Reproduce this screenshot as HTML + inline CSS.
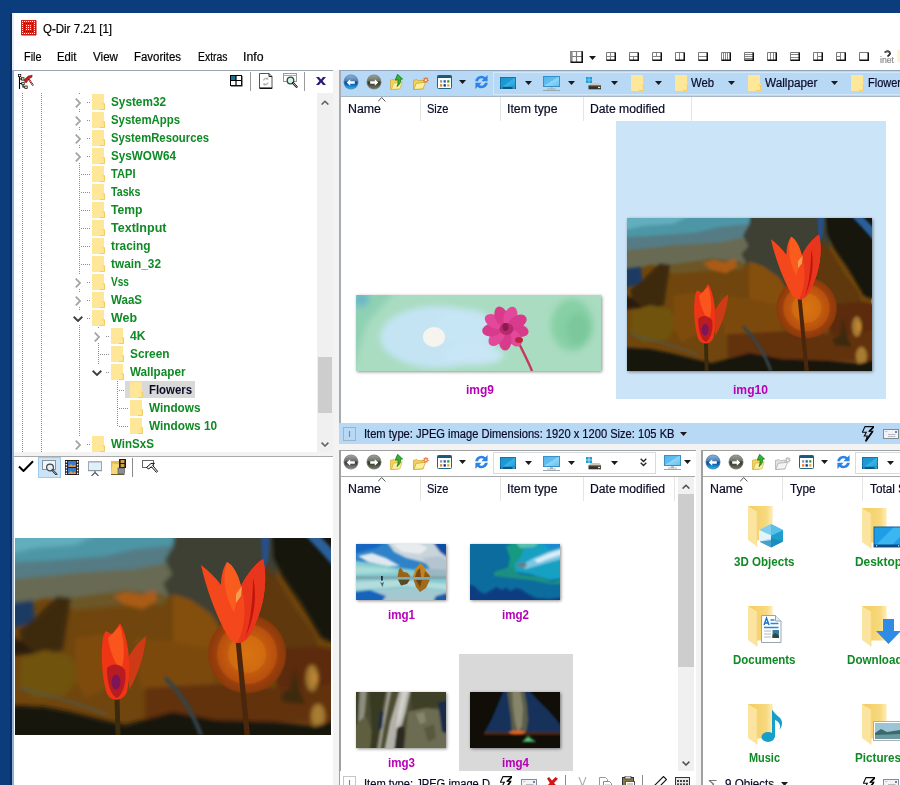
<!DOCTYPE html>
<html lang="en"><head><meta charset="utf-8"><title>Q-Dir 7.21 [1]</title>
<style>
html,body{margin:0;padding:0}
body{width:900px;height:785px;overflow:hidden;background:#0b3d7c;position:relative;font-family:"Liberation Sans",sans-serif;font-size:12px}
#root{position:absolute;left:0;top:0;width:900px;height:785px;overflow:hidden}
#root div,#root svg,#root span{position:absolute}
#root svg{overflow:hidden;display:block}
span.t{white-space:pre;line-height:1;transform-origin:0 0;-webkit-text-stroke:.2px currentColor}
span.b{font-weight:bold;-webkit-text-stroke:0}
</style></head>
<body><div id="root">
<div style="left:13px;top:13px;width:887px;height:772px;background:#fff;"></div>
<div style="left:10px;top:14px;width:2px;height:771px;background:#0a2d60;"></div>
<svg style="left:21px;top:20px;" width="16" height="16" viewBox="0 0 16 16"><rect x="0" y="0" width="15" height="15" fill="#dc2418"/><path d="M15 .5V15H.5" fill="none" stroke="#a01812" stroke-width="1"/><rect x="1" y="1" width="1" height="1" fill="#fff"/><rect x="1" y="3" width="1" height="1" fill="#fff"/><rect x="1" y="5" width="1" height="1" fill="#fff"/><rect x="1" y="7" width="1" height="1" fill="#fff"/><rect x="1" y="9" width="1" height="1" fill="#fff"/><rect x="1" y="11" width="1" height="1" fill="#fff"/><rect x="1" y="13" width="1" height="1" fill="#fff"/><rect x="3" y="1" width="1" height="1" fill="#fff"/><rect x="3" y="3" width="1" height="1" fill="#7e0808"/><rect x="3" y="5" width="1" height="1" fill="#7e0808"/><rect x="3" y="7" width="1" height="1" fill="#7e0808"/><rect x="3" y="9" width="1" height="1" fill="#7e0808"/><rect x="3" y="11" width="1" height="1" fill="#7e0808"/><rect x="3" y="13" width="1" height="1" fill="#fff"/><rect x="5" y="1" width="1" height="1" fill="#fff"/><rect x="5" y="3" width="1" height="1" fill="#7e0808"/><rect x="5" y="5" width="1" height="1" fill="#fff"/><rect x="5" y="7" width="1" height="1" fill="#fff"/><rect x="5" y="9" width="1" height="1" fill="#fff"/><rect x="5" y="11" width="1" height="1" fill="#7e0808"/><rect x="5" y="13" width="1" height="1" fill="#fff"/><rect x="7" y="1" width="1" height="1" fill="#fff"/><rect x="7" y="3" width="1" height="1" fill="#7e0808"/><rect x="7" y="5" width="1" height="1" fill="#fff"/><rect x="7" y="7" width="1" height="1" fill="#fff"/><rect x="7" y="9" width="1" height="1" fill="#fff"/><rect x="7" y="11" width="1" height="1" fill="#7e0808"/><rect x="7" y="13" width="1" height="1" fill="#fff"/><rect x="9" y="1" width="1" height="1" fill="#fff"/><rect x="9" y="3" width="1" height="1" fill="#7e0808"/><rect x="9" y="5" width="1" height="1" fill="#fff"/><rect x="9" y="7" width="1" height="1" fill="#fff"/><rect x="9" y="9" width="1" height="1" fill="#fff"/><rect x="9" y="11" width="1" height="1" fill="#7e0808"/><rect x="9" y="13" width="1" height="1" fill="#fff"/><rect x="11" y="1" width="1" height="1" fill="#fff"/><rect x="11" y="3" width="1" height="1" fill="#7e0808"/><rect x="11" y="5" width="1" height="1" fill="#7e0808"/><rect x="11" y="7" width="1" height="1" fill="#7e0808"/><rect x="11" y="9" width="1" height="1" fill="#7e0808"/><rect x="11" y="11" width="1" height="1" fill="#7e0808"/><rect x="11" y="13" width="1" height="1" fill="#fff"/><rect x="13" y="1" width="1" height="1" fill="#fff"/><rect x="13" y="3" width="1" height="1" fill="#fff"/><rect x="13" y="5" width="1" height="1" fill="#fff"/><rect x="13" y="7" width="1" height="1" fill="#fff"/><rect x="13" y="9" width="1" height="1" fill="#fff"/><rect x="13" y="11" width="1" height="1" fill="#fff"/><rect x="13" y="13" width="1" height="1" fill="#fff"/></svg>
<span class="t" style="left:42.50px;top:22.84px;font-size:12px;color:#000;transform:scaleX(0.9579);">Q-Dir 7.21 [1]</span>
<span class="t" style="left:23.50px;top:50.84px;font-size:12px;color:#000;transform:scaleX(0.9047);">File</span>
<span class="t" style="left:57.00px;top:50.84px;font-size:12px;color:#000;transform:scaleX(0.9426);">Edit</span>
<span class="t" style="left:93.00px;top:50.84px;font-size:12px;color:#000;transform:scaleX(0.9691);">View</span>
<span class="t" style="left:134.00px;top:50.84px;font-size:12px;color:#000;transform:scaleX(0.9522);">Favorites</span>
<span class="t" style="left:197.50px;top:50.84px;font-size:12px;color:#000;transform:scaleX(0.8672);">Extras</span>
<span class="t" style="left:243.00px;top:50.84px;font-size:12px;color:#000;transform:scaleX(1.0242);">Info</span>
<svg style="left:570px;top:51px;" width="13" height="12" viewBox="0 0 13 12"><rect x="0" y="0" width="13" height="12" fill="#fff"/><rect x="0" y="0" width="2.6" height="11" fill="#8c8c8c"/><path d="M.5 11V.5H12" fill="none" stroke="#888"/><path d="M6.5 .5V11M2 5.5H12" stroke="#7c7c7c" stroke-width="1.2"/><path d="M12.2 .3V11.2H.5" fill="none" stroke="#111" stroke-width="1.6"/></svg>
<svg style="left:589px;top:56px;" width="7" height="4" viewBox="0 0 7 4"><path d="M0 0h7L3.5 4z" fill="#1a1a1a"/></svg>
<svg style="left:606px;top:52px;" width="10" height="9" viewBox="0 0 10 9"><rect x="0" y="0" width="10" height="9" fill="#fff"/><path d="M4.5 0.5V8M0.5 4.5H9" stroke="#858585" stroke-width="1" fill="none"/><path d="M.5 8.5V.5H9.5" fill="none" stroke="#7a7a7a"/><path d="M9.250 .5V8.250H.5" fill="none" stroke="#111" stroke-width="1.500"/></svg>
<svg style="left:629px;top:52px;" width="10" height="9" viewBox="0 0 10 9"><rect x="0" y="0" width="10" height="9" fill="#fff"/><path d="M0.5 4.5H9M4.5 4.5V8" stroke="#858585" stroke-width="1" fill="none"/><path d="M.5 8.5V.5H9.5" fill="none" stroke="#7a7a7a"/><path d="M9.250 .5V8.250H.5" fill="none" stroke="#111" stroke-width="1.500"/></svg>
<svg style="left:652px;top:52px;" width="10" height="9" viewBox="0 0 10 9"><rect x="0" y="0" width="10" height="9" fill="#fff"/><path d="M0.5 4.5H9M4.5 0.5V4.5" stroke="#858585" stroke-width="1" fill="none"/><path d="M.5 8.5V.5H9.5" fill="none" stroke="#7a7a7a"/><path d="M9.250 .5V8.250H.5" fill="none" stroke="#111" stroke-width="1.500"/></svg>
<svg style="left:675px;top:52px;" width="10" height="9" viewBox="0 0 10 9"><rect x="0" y="0" width="10" height="9" fill="#fff"/><path d="M4.5 0.5V8" stroke="#858585" stroke-width="1" fill="none"/><path d="M.5 8.5V.5H9.5" fill="none" stroke="#7a7a7a"/><path d="M9.250 .5V8.250H.5" fill="none" stroke="#111" stroke-width="1.500"/></svg>
<svg style="left:698px;top:52px;" width="10" height="9" viewBox="0 0 10 9"><rect x="0" y="0" width="10" height="9" fill="#fff"/><path d="M0.5 4.5H9" stroke="#858585" stroke-width="1" fill="none"/><path d="M.5 8.5V.5H9.5" fill="none" stroke="#7a7a7a"/><path d="M9.250 .5V8.250H.5" fill="none" stroke="#111" stroke-width="1.500"/></svg>
<svg style="left:721px;top:52px;" width="10" height="9" viewBox="0 0 10 9"><rect x="0" y="0" width="10" height="9" fill="#fff"/><path d="M2.5 0.5V8M4.5 0.5V8M6.5 0.5V8" stroke="#858585" stroke-width="1" fill="none"/><path d="M.5 8.5V.5H9.5" fill="none" stroke="#7a7a7a"/><path d="M9.250 .5V8.250H.5" fill="none" stroke="#111" stroke-width="1.500"/></svg>
<svg style="left:744px;top:52px;" width="10" height="9" viewBox="0 0 10 9"><rect x="0" y="0" width="10" height="9" fill="#fff"/><path d="M0.5 2.5H9M0.5 4.5H9M0.5 6.5H9" stroke="#858585" stroke-width="1" fill="none"/><path d="M.5 8.5V.5H9.5" fill="none" stroke="#7a7a7a"/><path d="M9.250 .5V8.250H.5" fill="none" stroke="#111" stroke-width="1.500"/></svg>
<svg style="left:767px;top:52px;" width="10" height="9" viewBox="0 0 10 9"><rect x="0" y="0" width="10" height="9" fill="#fff"/><path d="M3.5 0.5V8M6.5 0.5V8" stroke="#858585" stroke-width="1" fill="none"/><path d="M.5 8.5V.5H9.5" fill="none" stroke="#7a7a7a"/><path d="M9.250 .5V8.250H.5" fill="none" stroke="#111" stroke-width="1.500"/></svg>
<svg style="left:790px;top:52px;" width="10" height="9" viewBox="0 0 10 9"><rect x="0" y="0" width="10" height="9" fill="#fff"/><path d="M0.5 2.5H9M0.5 5.5H9" stroke="#858585" stroke-width="1" fill="none"/><path d="M.5 8.5V.5H9.5" fill="none" stroke="#7a7a7a"/><path d="M9.250 .5V8.250H.5" fill="none" stroke="#111" stroke-width="1.500"/></svg>
<svg style="left:813px;top:52px;" width="10" height="9" viewBox="0 0 10 9"><rect x="0" y="0" width="10" height="9" fill="#fff"/><path d="M4.5 0.5V8M4.5 4.5H9" stroke="#858585" stroke-width="1" fill="none"/><path d="M.5 8.5V.5H9.5" fill="none" stroke="#7a7a7a"/><path d="M9.250 .5V8.250H.5" fill="none" stroke="#111" stroke-width="1.500"/></svg>
<svg style="left:836px;top:52px;" width="10" height="9" viewBox="0 0 10 9"><rect x="0" y="0" width="10" height="9" fill="#fff"/><path d="M4.5 0.5V8M0.5 4.5H4.5" stroke="#858585" stroke-width="1" fill="none"/><path d="M.5 8.5V.5H9.5" fill="none" stroke="#7a7a7a"/><path d="M9.250 .5V8.250H.5" fill="none" stroke="#111" stroke-width="1.500"/></svg>
<svg style="left:859px;top:52px;" width="10" height="9" viewBox="0 0 10 9"><rect x="0" y="0" width="10" height="9" fill="#fff"/><path d="M.5 8.5V.5H9.5" fill="none" stroke="#7a7a7a"/><path d="M9.250 .5V8.250H.5" fill="none" stroke="#111" stroke-width="1.500"/></svg>
<svg style="left:882px;top:50px;" width="10" height="9" viewBox="0 0 13 10"><path d="M3.5 2.5Q7 -.8 10 2.2Q11.5 4.5 8 6.5V8" fill="none" stroke="#222" stroke-width="2.2"/><path d="M3.5 2.5Q7 -.8 10 2.2" fill="none" stroke="#999" stroke-width=".8"/></svg>
<span class="t" style="left:879.50px;top:56.38px;font-size:9px;color:#8a8a8a;transform:scaleX(0.9645);">inet</span>
<div style="left:897px;top:50px;width:3px;height:12px;background:#fdf5cf;"></div>
<div style="left:13px;top:70px;width:887px;height:715px;background:#f3f3f3;"></div>
<div style="left:13px;top:70px;width:320px;height:1px;background:#9aa3ad;"></div>
<div style="left:13px;top:71px;width:320px;height:381px;background:#fff;"></div>
<svg style="left:18px;top:74px;" width="16" height="16" viewBox="0 0 16 16"><path d="M1.5 1V15M1.500 5H4M1.500 9.500H4M5 10.500V13H7.500" fill="none" stroke="#000" stroke-width="1.100"/><rect x=".4" y=".3" width="2.400" height="2.400" fill="#fff" stroke="#000" stroke-width=".7"/><rect x="3.600" y="3.700" width="2.400" height="2.400" fill="#f4f480" stroke="#000" stroke-width=".7"/><rect x="3.800" y="8.300" width="2.400" height="2.400" fill="#fff" stroke="#000" stroke-width=".7"/><rect x="6.800" y="12" width="2.400" height="2.400" fill="#f4f480" stroke="#000" stroke-width=".7"/><path d="M10.500 5L15.200 11.500" stroke="#7c1010" stroke-width="2" stroke-dasharray="1.200 .6"/><path d="M5.800 6.200L10.300 2 14.200 1.300 13.800 3.200 11.200 4.600 8 9z" fill="#c41c1c" stroke="#701010" stroke-width=".6"/></svg>
<svg style="left:230px;top:75px;" width="13" height="12" viewBox="0 0 13 12"><rect x=".5" y=".5" width="11" height="10" fill="#fff" stroke="#000"/><rect x="1" y="1" width="5" height="4.5" fill="#16739a"/><path d="M6 0v11M0 5.5h12" stroke="#000" stroke-width="1.2"/><path d="M12.3 1v10.3H1" stroke="#555" stroke-width=".8" fill="none"/></svg>
<div style="left:250px;top:72px;width:1px;height:19px;background:#9a9a9a;"></div>
<svg style="left:259px;top:73px;" width="14" height="16" viewBox="0 0 14 16"><path d="M.5 .5h9.5l3 3V15H.5z" fill="#fff" stroke="#555"/><path d="M.5 15.3h12.8" stroke="#000" stroke-width="1.2"/><path d="M10 .5v3h3" fill="none" stroke="#222"/><path d="M4.5 7.5a2.5 2.5 0 0 1 4-1.5M9 9.5a2.5 2.5 0 0 1-4 1.5" fill="none" stroke="#b0b0b0" stroke-width="1.3"/><path d="M8 4l2 2.2-2.6.5zM5.6 13l-2-2.2 2.6-.5z" fill="#b0b0b0"/></svg>
<svg style="left:283px;top:73px;" width="15" height="16" viewBox="0 0 15 16"><rect x=".5" y=".5" width="13" height="8" fill="#fff" stroke="#999"/><path d="M.5 2.5h13" stroke="#aaa"/><circle cx="7.5" cy="7.5" r="3.3" fill="#d6efe9" stroke="#2a4a48" stroke-width="1.3"/><path d="M10 10l3.6 3.8" stroke="#222" stroke-width="2.2" stroke-linecap="round"/><path d="M10.4 10.4l3 3.1" stroke="#ccc" stroke-width=".8" stroke-linecap="round"/></svg>
<div style="left:304px;top:72px;width:1px;height:19px;background:#9a9a9a;"></div>
<svg style="left:316px;top:77px;" width="10" height="8" viewBox="0 0 10 8"><path d="M0 0h3l2 2.4L7 0h3L6.6 4 10 8H7L5 5.6 3 8H0l3.4-4z" fill="#2a1a80"/></svg>
<svg style="left:13px;top:71px;" width="304" height="381" viewBox="0 0 304 381"><path d="M9.5 22V381" stroke="#8c8c8c" stroke-width="1" stroke-dasharray="1 1" fill="none"/><path d="M28.5 22V381" stroke="#8c8c8c" stroke-width="1" stroke-dasharray="1 1" fill="none"/><path d="M66.5 22V372" stroke="#8c8c8c" stroke-width="1" stroke-dasharray="1 1" fill="none"/><path d="M85.5 256V301" stroke="#8c8c8c" stroke-width="1" stroke-dasharray="1 1" fill="none"/><path d="M104.5 310V355" stroke="#8c8c8c" stroke-width="1" stroke-dasharray="1 1" fill="none"/><path d="M74 31.5H78" stroke="#8c8c8c" stroke-width="1" stroke-dasharray="1 1" fill="none"/><path d="M74 49.5H78" stroke="#8c8c8c" stroke-width="1" stroke-dasharray="1 1" fill="none"/><path d="M74 67.5H78" stroke="#8c8c8c" stroke-width="1" stroke-dasharray="1 1" fill="none"/><path d="M74 85.5H78" stroke="#8c8c8c" stroke-width="1" stroke-dasharray="1 1" fill="none"/><path d="M68 103.5H78" stroke="#8c8c8c" stroke-width="1" stroke-dasharray="1 1" fill="none"/><path d="M68 121.5H78" stroke="#8c8c8c" stroke-width="1" stroke-dasharray="1 1" fill="none"/><path d="M68 139.5H78" stroke="#8c8c8c" stroke-width="1" stroke-dasharray="1 1" fill="none"/><path d="M68 157.5H78" stroke="#8c8c8c" stroke-width="1" stroke-dasharray="1 1" fill="none"/><path d="M68 175.5H78" stroke="#8c8c8c" stroke-width="1" stroke-dasharray="1 1" fill="none"/><path d="M68 193.5H78" stroke="#8c8c8c" stroke-width="1" stroke-dasharray="1 1" fill="none"/><path d="M74 211.5H78" stroke="#8c8c8c" stroke-width="1" stroke-dasharray="1 1" fill="none"/><path d="M74 229.5H78" stroke="#8c8c8c" stroke-width="1" stroke-dasharray="1 1" fill="none"/><path d="M74 247.5H78" stroke="#8c8c8c" stroke-width="1" stroke-dasharray="1 1" fill="none"/><path d="M93 265.5H97" stroke="#8c8c8c" stroke-width="1" stroke-dasharray="1 1" fill="none"/><path d="M87 283.5H97" stroke="#8c8c8c" stroke-width="1" stroke-dasharray="1 1" fill="none"/><path d="M93 301.5H97" stroke="#8c8c8c" stroke-width="1" stroke-dasharray="1 1" fill="none"/><path d="M106 319.5H116" stroke="#8c8c8c" stroke-width="1" stroke-dasharray="1 1" fill="none"/><path d="M106 337.5H116" stroke="#8c8c8c" stroke-width="1" stroke-dasharray="1 1" fill="none"/><path d="M106 355.5H116" stroke="#8c8c8c" stroke-width="1" stroke-dasharray="1 1" fill="none"/><path d="M74 373.5H78" stroke="#8c8c8c" stroke-width="1" stroke-dasharray="1 1" fill="none"/></svg>
<div style="left:73px;top:95px;width:9px;height:14px;background:#fff;"></div>
<svg style="left:75px;top:97.5px;" width="6" height="10" viewBox="0 0 6 10"><path d="M.8 .6L5 5 .8 9.400" fill="none" stroke="#a3a3a3" stroke-width="1.800"/></svg>
<svg style="left:92px;top:94px;" width="13" height="16" viewBox="0 0 13 16"><path d="M0 0H12V9H13V16H0z" fill="#ffe799"/><path d="M10.5 10H12.5V15.5H8" fill="none" stroke="#f3cf62" stroke-width="1"/><path d="M11.5 11V15" stroke="#ffe28a" stroke-width="1"/></svg>
<span class="t b" style="left:111.00px;top:96.34px;font-size:12px;color:#0f8a24;transform:scaleX(0.9813);">System32</span>
<div style="left:73px;top:113px;width:9px;height:14px;background:#fff;"></div>
<svg style="left:75px;top:115.5px;" width="6" height="10" viewBox="0 0 6 10"><path d="M.8 .6L5 5 .8 9.400" fill="none" stroke="#a3a3a3" stroke-width="1.800"/></svg>
<svg style="left:92px;top:112px;" width="13" height="16" viewBox="0 0 13 16"><path d="M0 0H12V9H13V16H0z" fill="#ffe799"/><path d="M10.5 10H12.5V15.5H8" fill="none" stroke="#f3cf62" stroke-width="1"/><path d="M11.5 11V15" stroke="#ffe28a" stroke-width="1"/></svg>
<span class="t b" style="left:111.00px;top:114.34px;font-size:12px;color:#0f8a24;transform:scaleX(0.9491);">SystemApps</span>
<div style="left:73px;top:131px;width:9px;height:14px;background:#fff;"></div>
<svg style="left:75px;top:133.5px;" width="6" height="10" viewBox="0 0 6 10"><path d="M.8 .6L5 5 .8 9.400" fill="none" stroke="#a3a3a3" stroke-width="1.800"/></svg>
<svg style="left:92px;top:130px;" width="13" height="16" viewBox="0 0 13 16"><path d="M0 0H12V9H13V16H0z" fill="#ffe799"/><path d="M10.5 10H12.5V15.5H8" fill="none" stroke="#f3cf62" stroke-width="1"/><path d="M11.5 11V15" stroke="#ffe28a" stroke-width="1"/></svg>
<span class="t b" style="left:111.00px;top:132.34px;font-size:12px;color:#0f8a24;transform:scaleX(0.9417);">SystemResources</span>
<div style="left:73px;top:149px;width:9px;height:14px;background:#fff;"></div>
<svg style="left:75px;top:151.5px;" width="6" height="10" viewBox="0 0 6 10"><path d="M.8 .6L5 5 .8 9.400" fill="none" stroke="#a3a3a3" stroke-width="1.800"/></svg>
<svg style="left:92px;top:148px;" width="13" height="16" viewBox="0 0 13 16"><path d="M0 0H12V9H13V16H0z" fill="#ffe799"/><path d="M10.5 10H12.5V15.5H8" fill="none" stroke="#f3cf62" stroke-width="1"/><path d="M11.5 11V15" stroke="#ffe28a" stroke-width="1"/></svg>
<span class="t b" style="left:111.00px;top:150.34px;font-size:12px;color:#0f8a24;transform:scaleX(0.9747);">SysWOW64</span>
<svg style="left:92px;top:166px;" width="13" height="16" viewBox="0 0 13 16"><path d="M0 0H12V9H13V16H0z" fill="#ffe799"/><path d="M10.5 10H12.5V15.5H8" fill="none" stroke="#f3cf62" stroke-width="1"/><path d="M11.5 11V15" stroke="#ffe28a" stroke-width="1"/></svg>
<span class="t b" style="left:111.00px;top:168.34px;font-size:12px;color:#0f8a24;transform:scaleX(0.9262);">TAPI</span>
<svg style="left:92px;top:184px;" width="13" height="16" viewBox="0 0 13 16"><path d="M0 0H12V9H13V16H0z" fill="#ffe799"/><path d="M10.5 10H12.5V15.5H8" fill="none" stroke="#f3cf62" stroke-width="1"/><path d="M11.5 11V15" stroke="#ffe28a" stroke-width="1"/></svg>
<span class="t b" style="left:111.00px;top:186.34px;font-size:12px;color:#0f8a24;transform:scaleX(0.8901);">Tasks</span>
<svg style="left:92px;top:202px;" width="13" height="16" viewBox="0 0 13 16"><path d="M0 0H12V9H13V16H0z" fill="#ffe799"/><path d="M10.5 10H12.5V15.5H8" fill="none" stroke="#f3cf62" stroke-width="1"/><path d="M11.5 11V15" stroke="#ffe28a" stroke-width="1"/></svg>
<span class="t b" style="left:111.00px;top:204.34px;font-size:12px;color:#0f8a24;transform:scaleX(1.0120);">Temp</span>
<svg style="left:92px;top:220px;" width="13" height="16" viewBox="0 0 13 16"><path d="M0 0H12V9H13V16H0z" fill="#ffe799"/><path d="M10.5 10H12.5V15.5H8" fill="none" stroke="#f3cf62" stroke-width="1"/><path d="M11.5 11V15" stroke="#ffe28a" stroke-width="1"/></svg>
<span class="t b" style="left:111.00px;top:222.34px;font-size:12px;color:#0f8a24;transform:scaleX(1.0450);">TextInput</span>
<svg style="left:92px;top:238px;" width="13" height="16" viewBox="0 0 13 16"><path d="M0 0H12V9H13V16H0z" fill="#ffe799"/><path d="M10.5 10H12.5V15.5H8" fill="none" stroke="#f3cf62" stroke-width="1"/><path d="M11.5 11V15" stroke="#ffe28a" stroke-width="1"/></svg>
<span class="t b" style="left:111.00px;top:240.34px;font-size:12px;color:#0f8a24;transform:scaleX(0.9871);">tracing</span>
<svg style="left:92px;top:256px;" width="13" height="16" viewBox="0 0 13 16"><path d="M0 0H12V9H13V16H0z" fill="#ffe799"/><path d="M10.5 10H12.5V15.5H8" fill="none" stroke="#f3cf62" stroke-width="1"/><path d="M11.5 11V15" stroke="#ffe28a" stroke-width="1"/></svg>
<span class="t b" style="left:111.00px;top:258.34px;font-size:12px;color:#0f8a24;transform:scaleX(0.9861);">twain_32</span>
<div style="left:73px;top:275px;width:9px;height:14px;background:#fff;"></div>
<svg style="left:75px;top:277.5px;" width="6" height="10" viewBox="0 0 6 10"><path d="M.8 .6L5 5 .8 9.400" fill="none" stroke="#a3a3a3" stroke-width="1.800"/></svg>
<svg style="left:92px;top:274px;" width="13" height="16" viewBox="0 0 13 16"><path d="M0 0H12V9H13V16H0z" fill="#ffe799"/><path d="M10.5 10H12.5V15.5H8" fill="none" stroke="#f3cf62" stroke-width="1"/><path d="M11.5 11V15" stroke="#ffe28a" stroke-width="1"/></svg>
<span class="t b" style="left:111.00px;top:276.34px;font-size:12px;color:#0f8a24;transform:scaleX(0.8427);">Vss</span>
<div style="left:73px;top:293px;width:9px;height:14px;background:#fff;"></div>
<svg style="left:75px;top:295.5px;" width="6" height="10" viewBox="0 0 6 10"><path d="M.8 .6L5 5 .8 9.400" fill="none" stroke="#a3a3a3" stroke-width="1.800"/></svg>
<svg style="left:92px;top:292px;" width="13" height="16" viewBox="0 0 13 16"><path d="M0 0H12V9H13V16H0z" fill="#ffe799"/><path d="M10.5 10H12.5V15.5H8" fill="none" stroke="#f3cf62" stroke-width="1"/><path d="M11.5 11V15" stroke="#ffe28a" stroke-width="1"/></svg>
<span class="t b" style="left:111.00px;top:294.34px;font-size:12px;color:#0f8a24;transform:scaleX(0.9617);">WaaS</span>
<div style="left:72px;top:311px;width:11px;height:14px;background:#fff;"></div>
<svg style="left:73px;top:315.5px;" width="10" height="6" viewBox="0 0 10 6"><path d="M.7 .8L5 5 9.300 .8" fill="none" stroke="#404040" stroke-width="1.900"/></svg>
<svg style="left:92px;top:310px;" width="13" height="16" viewBox="0 0 13 16"><path d="M0 0H12V9H13V16H0z" fill="#ffe799"/><path d="M10.5 10H12.5V15.5H8" fill="none" stroke="#f3cf62" stroke-width="1"/><path d="M11.5 11V15" stroke="#ffe28a" stroke-width="1"/></svg>
<span class="t b" style="left:111.00px;top:312.34px;font-size:12px;color:#0f8a24;transform:scaleX(1.0348);">Web</span>
<div style="left:92px;top:329px;width:9px;height:14px;background:#fff;"></div>
<svg style="left:94px;top:331.5px;" width="6" height="10" viewBox="0 0 6 10"><path d="M.8 .6L5 5 .8 9.400" fill="none" stroke="#a3a3a3" stroke-width="1.800"/></svg>
<svg style="left:111px;top:328px;" width="13" height="16" viewBox="0 0 13 16"><path d="M0 0H12V9H13V16H0z" fill="#ffe799"/><path d="M10.5 10H12.5V15.5H8" fill="none" stroke="#f3cf62" stroke-width="1"/><path d="M11.5 11V15" stroke="#ffe28a" stroke-width="1"/></svg>
<span class="t b" style="left:130.00px;top:330.34px;font-size:12px;color:#0f8a24;transform:scaleX(1.0102);">4K</span>
<svg style="left:111px;top:346px;" width="13" height="16" viewBox="0 0 13 16"><path d="M0 0H12V9H13V16H0z" fill="#ffe799"/><path d="M10.5 10H12.5V15.5H8" fill="none" stroke="#f3cf62" stroke-width="1"/><path d="M11.5 11V15" stroke="#ffe28a" stroke-width="1"/></svg>
<span class="t b" style="left:130.00px;top:348.34px;font-size:12px;color:#0f8a24;transform:scaleX(0.9867);">Screen</span>
<div style="left:91px;top:365px;width:11px;height:14px;background:#fff;"></div>
<svg style="left:92px;top:369.5px;" width="10" height="6" viewBox="0 0 10 6"><path d="M.7 .8L5 5 9.300 .8" fill="none" stroke="#404040" stroke-width="1.900"/></svg>
<svg style="left:111px;top:364px;" width="13" height="16" viewBox="0 0 13 16"><path d="M0 0H12V9H13V16H0z" fill="#ffe799"/><path d="M10.5 10H12.5V15.5H8" fill="none" stroke="#f3cf62" stroke-width="1"/><path d="M11.5 11V15" stroke="#ffe28a" stroke-width="1"/></svg>
<span class="t b" style="left:130.00px;top:366.34px;font-size:12px;color:#0f8a24;transform:scaleX(0.9753);">Wallpaper</span>
<div style="left:125px;top:381px;width:70px;height:17px;background:#d9d9d9;"></div>
<svg style="left:130px;top:382px;" width="13" height="16" viewBox="0 0 13 16"><path d="M0 0H12V9H13V16H0z" fill="#ffe799"/><path d="M10.5 10H12.5V15.5H8" fill="none" stroke="#f3cf62" stroke-width="1"/><path d="M11.5 11V15" stroke="#ffe28a" stroke-width="1"/></svg>
<span class="t b" style="left:149.00px;top:384.34px;font-size:12px;color:#0a0a26;transform:scaleX(0.9480);">Flowers</span>
<svg style="left:130px;top:400px;" width="13" height="16" viewBox="0 0 13 16"><path d="M0 0H12V9H13V16H0z" fill="#ffe799"/><path d="M10.5 10H12.5V15.5H8" fill="none" stroke="#f3cf62" stroke-width="1"/><path d="M11.5 11V15" stroke="#ffe28a" stroke-width="1"/></svg>
<span class="t b" style="left:149.00px;top:402.34px;font-size:12px;color:#0f8a24;transform:scaleX(0.9798);">Windows</span>
<svg style="left:130px;top:418px;" width="13" height="16" viewBox="0 0 13 16"><path d="M0 0H12V9H13V16H0z" fill="#ffe799"/><path d="M10.5 10H12.5V15.5H8" fill="none" stroke="#f3cf62" stroke-width="1"/><path d="M11.5 11V15" stroke="#ffe28a" stroke-width="1"/></svg>
<span class="t b" style="left:149.00px;top:420.34px;font-size:12px;color:#0f8a24;transform:scaleX(0.9822);">Windows 10</span>
<div style="left:73px;top:437px;width:9px;height:14px;background:#fff;"></div>
<svg style="left:75px;top:439.5px;" width="6" height="10" viewBox="0 0 6 10"><path d="M.8 .6L5 5 .8 9.400" fill="none" stroke="#a3a3a3" stroke-width="1.800"/></svg>
<svg style="left:92px;top:436px;" width="13" height="16" viewBox="0 0 13 16"><path d="M0 0H12V9H13V16H0z" fill="#ffe799"/><path d="M10.5 10H12.5V15.5H8" fill="none" stroke="#f3cf62" stroke-width="1"/><path d="M11.5 11V15" stroke="#ffe28a" stroke-width="1"/></svg>
<span class="t b" style="left:111.00px;top:438.34px;font-size:12px;color:#0f8a24;transform:scaleX(0.9646);">WinSxS</span>
<div style="left:317px;top:93px;width:16px;height:359px;background:#f0f0f0;"></div>
<svg style="left:321px;top:99.5px;" width="8" height="5" viewBox="0 0 8 5"><path d="M.6 4.6L4 1.2 7.4 4.6" fill="none" stroke="#606060" stroke-width="1.5"/></svg>
<svg style="left:321px;top:441.5px;" width="8" height="5" viewBox="0 0 8 5"><path d="M.6 .6L4 4 7.4 .6" fill="none" stroke="#606060" stroke-width="1.5"/></svg>
<div style="left:318px;top:357px;width:14px;height:56px;background:#cdcdcd;"></div>
<div style="left:13px;top:456px;width:320px;height:329px;background:#fff;"></div>
<div style="left:13px;top:456px;width:320px;height:1px;background:#a8a8a8;"></div>
<svg style="left:18px;top:460px;" width="16" height="12" viewBox="0 0 16 12"><path d="M1 6.5L5.5 11 15 1.2" fill="none" stroke="#000" stroke-width="2"/></svg>
<div style="left:38px;top:457px;width:23px;height:21px;background:#cce4f7;box-sizing:border-box;border:1px solid #99ccee;"></div>
<svg style="left:42px;top:460px;" width="16" height="15" viewBox="0 0 16 15"><rect x=".5" y=".5" width="13" height="9" fill="#eef6fb" stroke="#8a949c"/><circle cx="8" cy="7.5" r="3.4" fill="#e4f2f8" stroke="#444" stroke-width="1.2"/><path d="M10.5 10.2l3.8 4" stroke="#333" stroke-width="2.2" stroke-linecap="round"/><path d="M10.9 10.6l3.2 3.3" stroke="#cfcfcf" stroke-width=".8" stroke-linecap="round"/></svg>
<svg style="left:65px;top:460px;" width="14" height="15" viewBox="0 0 14 15"><rect x="0" y="0" width="14" height="15" fill="#1a1a1a"/><rect x="3" y="1" width="8" height="6" fill="#3a7bd0"/><rect x="3" y="8" width="8" height="6" fill="#3a7bd0"/><path d="M3 7l3-3 2 2 1.5-1.5L11 7z" fill="#e0a040"/><path d="M3 14l3-3 2 2 1.5-1.5L11 14z" fill="#e0a040"/><rect x=".7" y="1.0" width="1.4" height="1.6" fill="#fff"/><rect x="11.9" y="1.0" width="1.4" height="1.6" fill="#fff"/><rect x=".7" y="3.9" width="1.4" height="1.6" fill="#fff"/><rect x="11.9" y="3.9" width="1.4" height="1.6" fill="#fff"/><rect x=".7" y="6.8" width="1.4" height="1.6" fill="#fff"/><rect x="11.9" y="6.8" width="1.4" height="1.6" fill="#fff"/><rect x=".7" y="9.7" width="1.4" height="1.6" fill="#fff"/><rect x="11.9" y="9.7" width="1.4" height="1.6" fill="#fff"/><rect x=".7" y="12.6" width="1.4" height="1.6" fill="#fff"/><rect x="11.9" y="12.6" width="1.4" height="1.6" fill="#fff"/></svg>
<svg style="left:88px;top:461px;" width="14" height="15" viewBox="0 0 14 15"><rect x=".5" y=".5" width="13" height="9" fill="#dff0f8" stroke="#9ab"/><rect x="0" y="0" width="14" height="1.6" fill="#a8b4bc"/><rect x="0" y="9" width="14" height="1.2" fill="#8a949c"/><path d="M7 10v2M7 11.5L3.5 15M7 11.5L10.5 15" stroke="#555" stroke-width="1.1" fill="none"/></svg>
<svg style="left:110px;top:459px;" width="16" height="16" viewBox="0 0 16 16"><path d="M1 2h8l1 1v12.5H1z" fill="#e8b84a"/><path d="M1 15.5l1.5-11 7 .8v10.2z" fill="#f8d878"/><rect x="9" y="0" width="7" height="9" fill="#1a1a1a"/><rect x="10.6" y="1" width="3.8" height="3" fill="#d8a040"/><rect x="10.6" y="5" width="3.8" height="3" fill="#d8a040"/><rect x="8" y="9" width="6.5" height="5.5" fill="#8a8f96" stroke="#444" stroke-width=".6"/><path d="M1 15.5h13.5" stroke="#6a5a30" stroke-width="1"/></svg>
<div style="left:132px;top:458px;width:1px;height:19px;background:#8a8a8a;"></div>
<svg style="left:142px;top:460px;" width="17" height="13" viewBox="0 0 17 13"><rect x=".5" y=".5" width="11" height="7" fill="#fff" stroke="#666"/><path d="M4.5 7.5l4.5-4 3.4-.2-1.8 2 5 6-1.2 1-5-5.6-2.6 2.2z" fill="#fff" stroke="#111" stroke-width="1"/></svg>
<svg style="left:15px;top:538px;" width="316" height="197" viewBox="0 0 316 197"><defs><filter id="tb1a" x="-20%" y="-20%" width="140%" height="140%"><feGaussianBlur stdDeviation="2.2"/></filter>
<filter id="tb1b" x="-20%" y="-20%" width="140%" height="140%"><feGaussianBlur stdDeviation="1.4"/></filter>
<filter id="tb1c"><feGaussianBlur stdDeviation=".7"/></filter>
<radialGradient id="tb1g"><stop offset="0" stop-color="#d97412"/><stop offset=".45" stop-color="#d06a10"/><stop offset=".5" stop-color="#c25a0e"/><stop offset=".72" stop-color="#b8500e"/><stop offset=".78" stop-color="#9a400c"/><stop offset=".95" stop-color="#8c3a0a"/><stop offset="1" stop-color="#8c3a0a" stop-opacity="0"/></radialGradient></defs>
<rect width="316" height="197" fill="#70460e"/>
<g filter="url(#tb1a)">
<path d="M-10 -10H165V8L120 13 90 21 40 25-10 30z" fill="#4d96a6"/>
<path d="M-10 -10H95L60 7 20 10-10 17z" fill="#62aebc"/>
<path d="M-10 25L40 22 90 18 120 11 160 7V26L120 34 60 38-10 46z" fill="#547c84"/>
<path d="M-10 42L60 35 120 31 165 22V52L150 60 110 56 70 62 30 60-10 72z" fill="#686a52"/>
<path d="M40 62L70 58 110 52 150 56V66L100 68 60 72z" fill="#6c5626"/>
<path d="M-10 66L18 62 20 84 -10 92z" fill="#1d3a62"/>
<path d="M22 78L42 58 56 60 52 84 48 112 30 118 8 112 4 92z" fill="#3e2a08"/>
<path d="M-10 96L8 104 20 116 -10 118z" fill="#2a1e08"/>
<path d="M98 58L112 54 126 57 140 52 142 63 128 71 110 67z" fill="#aa5c18"/>
<path d="M160 -10H262V40L250 70 238 100 214 104 200 80 186 70 170 62 154 58 148 46 157 36 150 22 158 8z" fill="#3d4131"/>
<path d="M158 56L176 62 196 76 208 100 200 110 158 110z" fill="#84500e"/>
<path d="M250 26L262 40 280 70 300 96 306 120 270 120 240 100z" fill="#5e370c"/>
<path d="M256 -10H330V110L306 100 286 66 268 40 258 20z" fill="#16150a"/>
<path d="M6 120L30 112 56 118 64 140 50 158 20 160 4 148z" fill="#70520f"/>
<path d="M60 100L90 96 92 150 70 160 60 140z" fill="#7e4c0c"/>
<path d="M120 100L160 104 196 112 200 150 160 152 126 150z" fill="#7c4a0e"/>
<path d="M130 150L200 146 262 150 300 130 330 126V184H130z" fill="#62300a"/>
<path d="M258 112L300 108 330 112V140L300 150 262 150z" fill="#5c2a08"/>
<ellipse cx="297" cy="140" rx="6" ry="13" fill="#a87c32"/>
<ellipse cx="303" cy="178" rx="7" ry="12" fill="#a87c32"/>
<ellipse cx="300" cy="140" rx="2.5" ry="6" fill="#c88c30"/>
<path d="M279 128L284 150 290 166 268 164 266 156 276 150z" fill="#3c2a08"/>
<path d="M-10 167L30 169 56 174 92 183 110 187 158 174 200 182 262 184 300 188 330 180V210H-10z" fill="#18140a"/>
</g>
<g filter="url(#tb1b)">
<path d="M246 -5H255L253 22 248 34z" fill="#27508a"/>
<path d="M288 -5H302L320 14V30L304 12z" fill="#2a5f9a"/>
<path d="M150 140Q172 160 186 197" stroke="#34444a" stroke-width="4" fill="none"/>
<path d="M4 150L50 162 92 176" stroke="#4a5a5c" stroke-width="1.5" fill="none"/>
</g>
<circle cx="232" cy="116" r="40" fill="url(#tb1g)"/>
<g filter="url(#tb1c)">
<path d="M220.5 102L225.5 102 235 197 229.5 197z" fill="#4a2808"/>
<path d="M99.5 160L104.5 160 105.5 197 100.5 197z" fill="#3a2c10"/>
<path d="M186 27C194 33 201 40 206 47C206 38 208 30 212 24C218 27 223 36 226 48C231 38 239 27 248 21C252 36 251 62 241 84C238 92 234 100 229 103C225 106 219 106 214 100C204 84 192 54 186 27z" fill="#f4471a"/>
<path d="M226 48C231 38 239 27 248 21C252 36 251 62 241 84C238 92 234 100 229 103C227 105 225 105 223 104C230 90 232 66 226 48z" fill="#e8341a"/>
<path d="M238 40C242 55 240 80 230 100C236 84 238 60 238 40z" fill="#bc1610"/>
<path d="M212 24C218 27 223 36 226 48C223 58 221 66 219 74C212 62 206 42 212 24z" fill="#f95c1e"/>
<path d="M221 56L227 48 226 58 221 65z" fill="#f8a050"/>
<path d="M114 118C120 108 126 102 131 98C130 114 124 136 114 152z" fill="#cc3a12"/>
<path d="M88 100C89 96 90 94 91 93C94 95 96 96 98 96C100 92 103 88 105 85C112 96 118 128 112 154C108 164 96 164 92 156C86 136 86 112 88 100z" fill="#ee3614"/>
<path d="M93 100C97 96 101 92 105 88C110 104 110 122 106 132C100 126 95 114 93 100z" fill="#f9541c"/>
<path d="M92 130C98 124 106 126 110 132C112 144 108 156 102 160C96 158 92 146 92 130z" fill="#b81c20"/>
<ellipse cx="101" cy="144" rx="4.5" ry="7.5" fill="#7c1458"/>
</g></svg>
<div style="left:339px;top:70px;width:561px;height:353px;background:#fff;"></div>
<div style="left:339px;top:70px;width:2px;height:353px;background:#a6acb2;"></div>
<div style="left:339px;top:70px;width:561px;height:1px;background:#8fa3b8;"></div>
<div style="left:341px;top:71px;width:559px;height:25px;background:#b7d9f6;"></div>
<div style="left:341px;top:96px;width:559px;height:1px;background:#a9b6c3;"></div>
<svg style="left:343.1px;top:74.3px;" width="16" height="16" viewBox="0 0 16 16"><defs><linearGradient id="gb1" x1="0" y1="0" x2="0" y2="1"><stop offset="0" stop-color="#8fb0d2"/><stop offset=".42" stop-color="#4a7fb8"/><stop offset=".5" stop-color="#0d4a92"/><stop offset=".62" stop-color="#0b5aa6"/><stop offset="1" stop-color="#25b4ec"/></linearGradient></defs><circle cx="8" cy="8" r="7.500" fill="#5f87ad"/><circle cx="8" cy="8" r="6.700" fill="url(#gb1)"/><path d="M3.700 8.500L7.200 5.300v2h4.600v2.400H7.200v2z" fill="#fff"/></svg>
<svg style="left:366px;top:74.3px;" width="16" height="16" viewBox="0 0 16 16"><defs><linearGradient id="gb2" x1="0" y1="0" x2="0" y2="1"><stop offset="0" stop-color="#9aa096"/><stop offset=".42" stop-color="#6a7064"/><stop offset=".5" stop-color="#34382c"/><stop offset=".62" stop-color="#3c4034"/><stop offset="1" stop-color="#6e7466"/></linearGradient></defs><circle cx="8" cy="8" r="7.500" fill="#7e8478"/><circle cx="8" cy="8" r="6.700" fill="url(#gb2)"/><path d="M12.300 8.500L8.800 5.300v2H4.200v2.400h4.600v2z" fill="#fff"/></svg>
<svg style="left:390px;top:74px;" width="14" height="16" viewBox="0 0 14 16"><path d="M.5 6.200l3.500-.8 1 1.200 3-.5V15l-7.500 .6z" fill="#f3d25c" stroke="#c9a227" stroke-width=".6"/><path d="M1.500 15.500L3.500 9.300l8.700-1.500-2.200 7z" fill="#fdf0a4" stroke="#cdaa30" stroke-width=".6"/><path d="M7.600 .3L12.600 5l-2 .2c.3 2.800-.8 5.400-3.600 7.400 1-2.500 1.300-4.500 1-6.900L5.200 6z" fill="#35b335" stroke="#0d6a10" stroke-width=".7"/></svg>
<svg style="left:413px;top:76.5px;" width="16" height="13" viewBox="0 0 16 13"><path d="M.5 3.300l3.600-.7 1 1.100 5-.5v8.600L.5 12.400z" fill="#f3d060" stroke="#c9a227" stroke-width=".7"/><path d="M.8 12.500L3.200 6.400l9.400-1.200-2.600 6.600z" fill="#fdeea0" stroke="#c9a227" stroke-width=".7"/><path d="M12.800 .2l.6 1.500 1.500-.6-.7 1.500 1.400 .8-1.600 .4 .2 1.600-1.400-1-1.300 1 .2-1.600-1.600-.4 1.400-.8-.7-1.500 1.500 .6z" fill="#ff8a28" stroke="#d8501a" stroke-width=".5"/><circle cx="12.800" cy="3.300" r="1" fill="#fff2d0"/></svg>
<svg style="left:437px;top:75px;" width="15" height="14" viewBox="0 0 15 14"><rect x=".5" y=".5" width="14" height="13" rx="1" fill="#fff" stroke="#1b6486"/><rect x=".5" y=".5" width="14" height="2.500" fill="#175a7e"/><rect x="3.0" y="5.2" width="2.2" height="2.4" fill="#8a9ab0"/><rect x="6.6" y="5.2" width="2.2" height="2.4" fill="#2a5aa8"/><rect x="10.2" y="5.2" width="2.2" height="2.4" fill="#2a9a3a"/><rect x="3.0" y="9.2" width="2.2" height="2.4" fill="#f08020"/><rect x="6.6" y="9.2" width="2.2" height="2.4" fill="#102a70"/><rect x="10.2" y="9.2" width="2.2" height="2.4" fill="#e8a030"/></svg>
<svg style="left:459px;top:80px;" width="7" height="4" viewBox="0 0 7 4"><path d="M0 0h7L3.5 4z" fill="#1a1a1a"/></svg>
<svg style="left:473.5px;top:74.3px;" width="15" height="16" viewBox="0 0 15 16"><path d="M1.2 7.2A6.3 6.3 0 0 1 11.5 3.2L13.6 1V7.2H7.4L9.6 5A3.6 3.6 0 0 0 4 7.2z" fill="#2b83e6"/><path d="M13.8 8.8A6.3 6.3 0 0 1 3.5 12.8L1.4 15V8.8H7.6L5.4 11A3.6 3.6 0 0 0 11 8.8z" fill="#2b83e6"/></svg>
<div style="left:493px;top:72px;width:407px;height:23px;background:#b7d9f6;box-sizing:border-box;border:1px solid #d3e7f8;border-right:none;"></div>
<svg style="left:500px;top:77px;" width="16" height="12" viewBox="0 0 16 12"><defs><linearGradient id="gds1" x1="0" y1="0" x2="1" y2="1"><stop offset="0" stop-color="#1b93cf"/><stop offset=".48" stop-color="#1d9bd6"/><stop offset=".5" stop-color="#3ab2e4"/><stop offset=".75" stop-color="#2aa6dc"/><stop offset="1" stop-color="#1d9bd6"/></linearGradient></defs><rect x="0" y="0" width="16" height="12" fill="url(#gds1)"/><rect x=".4" y=".4" width="15.200" height="11.200" fill="none" stroke="#0f6ea6" stroke-width=".8"/><rect x="0" y="9.800" width="16" height="2.200" fill="#0c5588"/><rect x="1.400" y="10.500" width="1" height=".9" fill="#fff"/><rect x="12.600" y="10.500" width="1" height=".9" fill="#fff"/><rect x="14.200" y="10.500" width=".9" height=".9" fill="#fff"/></svg>
<svg style="left:525px;top:81px;" width="7" height="4" viewBox="0 0 7 4"><path d="M0 0h7L3.5 4z" fill="#1a1a1a"/></svg>
<svg style="left:543px;top:76px;" width="17" height="15" viewBox="0 0 17 15"><defs><linearGradient id="gpc2" x1="0" y1="0" x2="1" y2="1"><stop offset="0" stop-color="#4fb4ec"/><stop offset=".48" stop-color="#62c0f0"/><stop offset=".5" stop-color="#90d6f8"/><stop offset="1" stop-color="#62c0f0"/></linearGradient></defs><rect x=".5" y=".5" width="16" height="10" fill="url(#gpc2)" stroke="#3a8fc4"/><rect x="7" y="11" width="3" height="2" fill="#b4c0c8"/><rect x="4" y="12.600" width="9" height=".8" fill="#9aa6ae"/><rect x="0" y="14" width="17" height="1" fill="#9aa8b2"/></svg>
<svg style="left:568px;top:81px;" width="7" height="4" viewBox="0 0 7 4"><path d="M0 0h7L3.5 4z" fill="#1a1a1a"/></svg>
<svg style="left:585.5px;top:77.3px;" width="16" height="13" viewBox="0 0 16 13"><rect x="0" y="0" width="2.700" height="2.700" fill="#1b9fd8"/><rect x="3.300" y="0" width="2.700" height="2.700" fill="#1b9fd8"/><rect x="0" y="3.300" width="2.700" height="2.700" fill="#1b9fd8"/><rect x="3.300" y="3.300" width="2.700" height="2.700" fill="#1b9fd8"/><path d="M4.500 6L13.500 6 15 8.500H2.500z" fill="#cfc8b8"/><rect x="2.500" y="8.500" width="12.500" height="3.800" fill="#34322c"/><rect x="2.500" y="8.500" width="12.500" height=".8" fill="#6a6860"/><rect x="12" y="9.900" width="2.200" height="1.200" fill="#e8e8e0"/></svg>
<svg style="left:611px;top:81px;" width="7" height="4" viewBox="0 0 7 4"><path d="M0 0h7L3.5 4z" fill="#1a1a1a"/></svg>
<svg style="left:630.5px;top:75px;" width="13" height="16" viewBox="0 0 13 16"><path d="M0 0H12V9H13V16H0z" fill="#ffe799"/><path d="M10.5 10H12.5V15.5H8" fill="none" stroke="#f3cf62" stroke-width="1"/><path d="M11.5 11V15" stroke="#ffe28a" stroke-width="1"/></svg>
<svg style="left:654.5px;top:81px;" width="7" height="4" viewBox="0 0 7 4"><path d="M0 0h7L3.5 4z" fill="#1a1a1a"/></svg>
<svg style="left:674.5px;top:75px;" width="13" height="16" viewBox="0 0 13 16"><path d="M0 0H12V9H13V16H0z" fill="#ffe799"/><path d="M10.5 10H12.5V15.5H8" fill="none" stroke="#f3cf62" stroke-width="1"/><path d="M11.5 11V15" stroke="#ffe28a" stroke-width="1"/></svg>
<span class="t" style="left:690.50px;top:77.34px;font-size:12px;color:#0a0a26;transform:scaleX(0.9400);">Web</span>
<svg style="left:728px;top:81px;" width="7" height="4" viewBox="0 0 7 4"><path d="M0 0h7L3.5 4z" fill="#1a1a1a"/></svg>
<svg style="left:748px;top:75px;" width="13" height="16" viewBox="0 0 13 16"><path d="M0 0H12V9H13V16H0z" fill="#ffe799"/><path d="M10.5 10H12.5V15.5H8" fill="none" stroke="#f3cf62" stroke-width="1"/><path d="M11.5 11V15" stroke="#ffe28a" stroke-width="1"/></svg>
<span class="t" style="left:764.50px;top:77.34px;font-size:12px;color:#0a0a26;transform:scaleX(0.9799);">Wallpaper</span>
<svg style="left:831px;top:81px;" width="7" height="4" viewBox="0 0 7 4"><path d="M0 0h7L3.5 4z" fill="#1a1a1a"/></svg>
<svg style="left:851px;top:75px;" width="13" height="16" viewBox="0 0 13 16"><path d="M0 0H12V9H13V16H0z" fill="#ffe799"/><path d="M10.5 10H12.5V15.5H8" fill="none" stroke="#f3cf62" stroke-width="1"/><path d="M11.5 11V15" stroke="#ffe28a" stroke-width="1"/></svg>
<span class="t" style="left:867.50px;top:77.34px;font-size:12px;color:#0a0a26;transform:scaleX(0.9163);">Flowers</span>
<span class="t" style="left:347.50px;top:103.34px;font-size:12px;color:#0a0a26;transform:scaleX(1.0307);">Name</span>
<div style="left:420px;top:97px;width:1px;height:24px;background:#e5e5e5;"></div>
<span class="t" style="left:427.00px;top:103.34px;font-size:12px;color:#0a0a26;transform:scaleX(0.9210);">Size</span>
<div style="left:500px;top:97px;width:1px;height:24px;background:#e5e5e5;"></div>
<span class="t" style="left:507.00px;top:103.34px;font-size:12px;color:#0a0a26;transform:scaleX(1.0231);">Item type</span>
<div style="left:583px;top:97px;width:1px;height:24px;background:#e5e5e5;"></div>
<span class="t" style="left:590.00px;top:103.34px;font-size:12px;color:#0a0a26;transform:scaleX(1.0129);">Date modified</span>
<div style="left:691px;top:97px;width:1px;height:24px;background:#e5e5e5;"></div>
<svg style="left:378px;top:97px;" width="8" height="5" viewBox="0 0 8 5"><path d="M0 4.500L3.700 .5 7.400 4.500" fill="none" stroke="#555" stroke-width="1"/></svg>
<div style="left:616px;top:121px;width:270px;height:277.5px;background:#cce4f7;"></div>
<svg style="left:356px;top:295px;box-shadow:1px 1px 3px rgba(0,0,0,.45);" width="245" height="76" viewBox="0 0 245 76"><defs><filter id="pk2a" x="-20%" y="-20%" width="140%" height="140%"><feGaussianBlur stdDeviation="3"/></filter><filter id="pk2b"><feGaussianBlur stdDeviation=".7"/></filter></defs>
<rect width="245" height="76" fill="#a9dcc1"/>
<g filter="url(#pk2a)">
<path d="M-5 -5 L40 -5 L10 30 L-5 80z" fill="#8fd0b4"/>
<ellipse cx="5" cy="4" rx="8" ry="8" fill="#6ab8c8"/>
<ellipse cx="82" cy="42" rx="58" ry="31" fill="#c4e4f4"/><ellipse cx="108" cy="32" rx="30" ry="18" fill="#c6e5f5"/>
<ellipse cx="118" cy="60" rx="30" ry="10" fill="#c8e6f6"/>
<ellipse cx="216" cy="30" rx="21" ry="26" fill="#86d0a4"/>
<ellipse cx="222" cy="34" rx="12" ry="16" fill="#7cc89c"/>
</g>
<g filter="url(#pk2b)">
<ellipse cx="78" cy="42" rx="11" ry="10" fill="#f6f4ee"/>
<path d="M161 44 C166 55 172 66 176 76" stroke="#c43a5a" stroke-width="2.4" fill="none"/><ellipse cx="162.7" cy="35.5" rx="10" ry="6.400" transform="rotate(11 162.7 35.5)" fill="#d83a8c"/><ellipse cx="157.9" cy="42.8" rx="10" ry="6.400" transform="rotate(51 157.9 42.8)" fill="#e24a9a"/><ellipse cx="149.2" cy="45.5" rx="10" ry="6.400" transform="rotate(91 149.2 45.5)" fill="#d83a8c"/><ellipse cx="140.6" cy="42.4" rx="10" ry="6.400" transform="rotate(131 140.6 42.4)" fill="#e24a9a"/><ellipse cx="136.1" cy="34.9" rx="10" ry="6.400" transform="rotate(171 136.1 34.9)" fill="#d83a8c"/><ellipse cx="138.0" cy="26.5" rx="10" ry="6.400" transform="rotate(211 138.0 26.5)" fill="#e24a9a"/><ellipse cx="145.2" cy="21.1" rx="10" ry="6.400" transform="rotate(251 145.2 21.1)" fill="#d83a8c"/><ellipse cx="154.4" cy="21.4" rx="10" ry="6.400" transform="rotate(291 154.4 21.4)" fill="#e24a9a"/><ellipse cx="161.4" cy="27.0" rx="10" ry="6.400" transform="rotate(331 161.4 27.0)" fill="#d83a8c"/><ellipse cx="150.5" cy="34" rx="7" ry="6" fill="#b82a70"/><ellipse cx="149.5" cy="32" rx="3" ry="4" fill="#8a1c4c"/><ellipse cx="163" cy="45" rx="4" ry="3" fill="#b8283a"/></g></svg>
<span class="t b" style="left:466.00px;top:383.84px;font-size:12px;color:#b500b5;transform:scaleX(0.9994);">img9</span>
<svg style="left:627px;top:218px;box-shadow:1px 1px 3px rgba(0,0,0,.45);" width="244.5" height="153" viewBox="0 0 316 197"><defs><filter id="tb3a" x="-20%" y="-20%" width="140%" height="140%"><feGaussianBlur stdDeviation="2.2"/></filter>
<filter id="tb3b" x="-20%" y="-20%" width="140%" height="140%"><feGaussianBlur stdDeviation="1.4"/></filter>
<filter id="tb3c"><feGaussianBlur stdDeviation=".7"/></filter>
<radialGradient id="tb3g"><stop offset="0" stop-color="#d97412"/><stop offset=".45" stop-color="#d06a10"/><stop offset=".5" stop-color="#c25a0e"/><stop offset=".72" stop-color="#b8500e"/><stop offset=".78" stop-color="#9a400c"/><stop offset=".95" stop-color="#8c3a0a"/><stop offset="1" stop-color="#8c3a0a" stop-opacity="0"/></radialGradient></defs>
<rect width="316" height="197" fill="#70460e"/>
<g filter="url(#tb3a)">
<path d="M-10 -10H165V8L120 13 90 21 40 25-10 30z" fill="#4d96a6"/>
<path d="M-10 -10H95L60 7 20 10-10 17z" fill="#62aebc"/>
<path d="M-10 25L40 22 90 18 120 11 160 7V26L120 34 60 38-10 46z" fill="#547c84"/>
<path d="M-10 42L60 35 120 31 165 22V52L150 60 110 56 70 62 30 60-10 72z" fill="#686a52"/>
<path d="M40 62L70 58 110 52 150 56V66L100 68 60 72z" fill="#6c5626"/>
<path d="M-10 66L18 62 20 84 -10 92z" fill="#1d3a62"/>
<path d="M22 78L42 58 56 60 52 84 48 112 30 118 8 112 4 92z" fill="#3e2a08"/>
<path d="M-10 96L8 104 20 116 -10 118z" fill="#2a1e08"/>
<path d="M98 58L112 54 126 57 140 52 142 63 128 71 110 67z" fill="#aa5c18"/>
<path d="M160 -10H262V40L250 70 238 100 214 104 200 80 186 70 170 62 154 58 148 46 157 36 150 22 158 8z" fill="#3d4131"/>
<path d="M158 56L176 62 196 76 208 100 200 110 158 110z" fill="#84500e"/>
<path d="M250 26L262 40 280 70 300 96 306 120 270 120 240 100z" fill="#5e370c"/>
<path d="M256 -10H330V110L306 100 286 66 268 40 258 20z" fill="#16150a"/>
<path d="M6 120L30 112 56 118 64 140 50 158 20 160 4 148z" fill="#70520f"/>
<path d="M60 100L90 96 92 150 70 160 60 140z" fill="#7e4c0c"/>
<path d="M120 100L160 104 196 112 200 150 160 152 126 150z" fill="#7c4a0e"/>
<path d="M130 150L200 146 262 150 300 130 330 126V184H130z" fill="#62300a"/>
<path d="M258 112L300 108 330 112V140L300 150 262 150z" fill="#5c2a08"/>
<ellipse cx="297" cy="140" rx="6" ry="13" fill="#a87c32"/>
<ellipse cx="303" cy="178" rx="7" ry="12" fill="#a87c32"/>
<ellipse cx="300" cy="140" rx="2.5" ry="6" fill="#c88c30"/>
<path d="M279 128L284 150 290 166 268 164 266 156 276 150z" fill="#3c2a08"/>
<path d="M-10 167L30 169 56 174 92 183 110 187 158 174 200 182 262 184 300 188 330 180V210H-10z" fill="#18140a"/>
</g>
<g filter="url(#tb3b)">
<path d="M246 -5H255L253 22 248 34z" fill="#27508a"/>
<path d="M288 -5H302L320 14V30L304 12z" fill="#2a5f9a"/>
<path d="M150 140Q172 160 186 197" stroke="#34444a" stroke-width="4" fill="none"/>
<path d="M4 150L50 162 92 176" stroke="#4a5a5c" stroke-width="1.5" fill="none"/>
</g>
<circle cx="232" cy="116" r="40" fill="url(#tb3g)"/>
<g filter="url(#tb3c)">
<path d="M220.5 102L225.5 102 235 197 229.5 197z" fill="#4a2808"/>
<path d="M99.5 160L104.5 160 105.5 197 100.5 197z" fill="#3a2c10"/>
<path d="M186 27C194 33 201 40 206 47C206 38 208 30 212 24C218 27 223 36 226 48C231 38 239 27 248 21C252 36 251 62 241 84C238 92 234 100 229 103C225 106 219 106 214 100C204 84 192 54 186 27z" fill="#f4471a"/>
<path d="M226 48C231 38 239 27 248 21C252 36 251 62 241 84C238 92 234 100 229 103C227 105 225 105 223 104C230 90 232 66 226 48z" fill="#e8341a"/>
<path d="M238 40C242 55 240 80 230 100C236 84 238 60 238 40z" fill="#bc1610"/>
<path d="M212 24C218 27 223 36 226 48C223 58 221 66 219 74C212 62 206 42 212 24z" fill="#f95c1e"/>
<path d="M221 56L227 48 226 58 221 65z" fill="#f8a050"/>
<path d="M114 118C120 108 126 102 131 98C130 114 124 136 114 152z" fill="#cc3a12"/>
<path d="M88 100C89 96 90 94 91 93C94 95 96 96 98 96C100 92 103 88 105 85C112 96 118 128 112 154C108 164 96 164 92 156C86 136 86 112 88 100z" fill="#ee3614"/>
<path d="M93 100C97 96 101 92 105 88C110 104 110 122 106 132C100 126 95 114 93 100z" fill="#f9541c"/>
<path d="M92 130C98 124 106 126 110 132C112 144 108 156 102 160C96 158 92 146 92 130z" fill="#b81c20"/>
<ellipse cx="101" cy="144" rx="4.5" ry="7.5" fill="#7c1458"/>
</g></svg>
<span class="t b" style="left:733.00px;top:383.84px;font-size:12px;color:#b500b5;transform:scaleX(1.0090);">img10</span>
<div style="left:339px;top:423px;width:561px;height:21px;background:#b7d9f6;"></div>
<svg style="left:343px;top:427px;" width="13" height="14" viewBox="0 0 13 14"><rect x=".5" y=".5" width="12" height="13" fill="none" stroke="#8a8a8a" stroke-dasharray="1 1"/><path d="M6.5 4v6" stroke="#7a8aa0" stroke-width="1.2"/></svg>
<span class="t" style="left:363.50px;top:428.34px;font-size:12px;color:#0a0a26;transform:scaleX(0.9273);">Item type: JPEG image Dimensions: 1920 x 1200 Size: 105 KB</span>
<svg style="left:680px;top:431.5px;" width="7" height="4" viewBox="0 0 7 4"><path d="M0 0h7L3.5 4z" fill="#1a1a1a"/></svg>
<svg style="left:862px;top:426px;" width="12" height="16" viewBox="0 0 12 16"><path d="M3 .6H12L7.300 5.300H10.700L3.700 15.300 5.300 10H2.300L4.300 6.300H.4z" fill="none" stroke="#0a0a0a" stroke-width="1.100" stroke-linejoin="miter"/><path d="M12 .6L7.300 5.300M10.700 5.300L3.700 15.300" stroke="#0a0a0a" stroke-width="1.700"/></svg>
<svg style="left:883px;top:429px;" width="16" height="10" viewBox="0 0 16 10"><rect x=".5" y=".5" width="15" height="9" fill="#f1f3f6" stroke="#7e8a96"/><path d="M5 5.500h7.500M5 7.500h7.500" stroke="#b8bcc2" stroke-width="1"/><rect x="12" y="2" width="2" height="2" fill="#7a8298"/><path d="M2 2.500h2.500" stroke="#d8c4b0" stroke-width="1"/></svg>
<div style="left:339px;top:450px;width:357px;height:335px;background:#fff;box-sizing:border-box;border:1px solid #a0a0a0;border-bottom:none;border-right:none;border-left:2px solid #a0a0a0;"></div>
<div style="left:340px;top:476px;width:355px;height:1px;background:#a8a8a8;"></div>
<svg style="left:343.1px;top:454.3px;" width="16" height="16" viewBox="0 0 16 16"><defs><linearGradient id="gb3" x1="0" y1="0" x2="0" y2="1"><stop offset="0" stop-color="#a2a2a2"/><stop offset=".42" stop-color="#6c6c6c"/><stop offset=".5" stop-color="#3a3a3a"/><stop offset=".62" stop-color="#454545"/><stop offset="1" stop-color="#8c8c8c"/></linearGradient></defs><circle cx="8" cy="8" r="7.500" fill="#8c8c8c"/><circle cx="8" cy="8" r="6.700" fill="url(#gb3)"/><path d="M3.700 8.500L7.200 5.300v2h4.600v2.400H7.200v2z" fill="#fff"/></svg>
<svg style="left:366px;top:454.3px;" width="16" height="16" viewBox="0 0 16 16"><defs><linearGradient id="gb4" x1="0" y1="0" x2="0" y2="1"><stop offset="0" stop-color="#9aa096"/><stop offset=".42" stop-color="#6a7064"/><stop offset=".5" stop-color="#34382c"/><stop offset=".62" stop-color="#3c4034"/><stop offset="1" stop-color="#6e7466"/></linearGradient></defs><circle cx="8" cy="8" r="7.500" fill="#7e8478"/><circle cx="8" cy="8" r="6.700" fill="url(#gb4)"/><path d="M12.300 8.500L8.800 5.300v2H4.200v2.400h4.600v2z" fill="#fff"/></svg>
<svg style="left:390px;top:454px;" width="14" height="16" viewBox="0 0 14 16"><path d="M.5 6.200l3.500-.8 1 1.200 3-.5V15l-7.500 .6z" fill="#f3d25c" stroke="#c9a227" stroke-width=".6"/><path d="M1.500 15.500L3.500 9.300l8.700-1.500-2.200 7z" fill="#fdf0a4" stroke="#cdaa30" stroke-width=".6"/><path d="M7.600 .3L12.600 5l-2 .2c.3 2.800-.8 5.400-3.600 7.400 1-2.500 1.300-4.500 1-6.900L5.200 6z" fill="#35b335" stroke="#0d6a10" stroke-width=".7"/></svg>
<svg style="left:413px;top:456.5px;" width="16" height="13" viewBox="0 0 16 13"><path d="M.5 3.300l3.600-.7 1 1.100 5-.5v8.600L.5 12.400z" fill="#f3d060" stroke="#c9a227" stroke-width=".7"/><path d="M.8 12.500L3.200 6.400l9.400-1.200-2.600 6.600z" fill="#fdeea0" stroke="#c9a227" stroke-width=".7"/><path d="M12.800 .2l.6 1.500 1.500-.6-.7 1.500 1.400 .8-1.600 .4 .2 1.600-1.400-1-1.300 1 .2-1.600-1.600-.4 1.400-.8-.7-1.500 1.500 .6z" fill="#ff8a28" stroke="#d8501a" stroke-width=".5"/><circle cx="12.800" cy="3.300" r="1" fill="#fff2d0"/></svg>
<svg style="left:437px;top:455px;" width="15" height="14" viewBox="0 0 15 14"><rect x=".5" y=".5" width="14" height="13" rx="1" fill="#fff" stroke="#1b6486"/><rect x=".5" y=".5" width="14" height="2.500" fill="#175a7e"/><rect x="3.0" y="5.2" width="2.2" height="2.4" fill="#8a9ab0"/><rect x="6.6" y="5.2" width="2.2" height="2.4" fill="#2a5aa8"/><rect x="10.2" y="5.2" width="2.2" height="2.4" fill="#2a9a3a"/><rect x="3.0" y="9.2" width="2.2" height="2.4" fill="#f08020"/><rect x="6.6" y="9.2" width="2.2" height="2.4" fill="#102a70"/><rect x="10.2" y="9.2" width="2.2" height="2.4" fill="#e8a030"/></svg>
<svg style="left:459px;top:460px;" width="7" height="4" viewBox="0 0 7 4"><path d="M0 0h7L3.5 4z" fill="#1a1a1a"/></svg>
<svg style="left:473.5px;top:454.3px;" width="15" height="16" viewBox="0 0 15 16"><path d="M1.2 7.2A6.3 6.3 0 0 1 11.5 3.2L13.6 1V7.2H7.4L9.6 5A3.6 3.6 0 0 0 4 7.2z" fill="#2b83e6"/><path d="M13.8 8.8A6.3 6.3 0 0 1 3.5 12.8L1.4 15V8.8H7.6L5.4 11A3.6 3.6 0 0 0 11 8.8z" fill="#2b83e6"/></svg>
<div style="left:493px;top:452px;width:163px;height:22px;background:#fff;box-sizing:border-box;border:1px solid #d4dce4;"></div>
<svg style="left:500px;top:457px;" width="16" height="12" viewBox="0 0 16 12"><defs><linearGradient id="gds3" x1="0" y1="0" x2="1" y2="1"><stop offset="0" stop-color="#1b93cf"/><stop offset=".48" stop-color="#1d9bd6"/><stop offset=".5" stop-color="#3ab2e4"/><stop offset=".75" stop-color="#2aa6dc"/><stop offset="1" stop-color="#1d9bd6"/></linearGradient></defs><rect x="0" y="0" width="16" height="12" fill="url(#gds3)"/><rect x=".4" y=".4" width="15.200" height="11.200" fill="none" stroke="#0f6ea6" stroke-width=".8"/><rect x="0" y="9.800" width="16" height="2.200" fill="#0c5588"/><rect x="1.400" y="10.500" width="1" height=".9" fill="#fff"/><rect x="12.600" y="10.500" width="1" height=".9" fill="#fff"/><rect x="14.200" y="10.500" width=".9" height=".9" fill="#fff"/></svg>
<svg style="left:525px;top:461px;" width="7" height="4" viewBox="0 0 7 4"><path d="M0 0h7L3.5 4z" fill="#1a1a1a"/></svg>
<svg style="left:543px;top:456px;" width="17" height="15" viewBox="0 0 17 15"><defs><linearGradient id="gpc4" x1="0" y1="0" x2="1" y2="1"><stop offset="0" stop-color="#4fb4ec"/><stop offset=".48" stop-color="#62c0f0"/><stop offset=".5" stop-color="#90d6f8"/><stop offset="1" stop-color="#62c0f0"/></linearGradient></defs><rect x=".5" y=".5" width="16" height="10" fill="url(#gpc4)" stroke="#3a8fc4"/><rect x="7" y="11" width="3" height="2" fill="#b4c0c8"/><rect x="4" y="12.600" width="9" height=".8" fill="#9aa6ae"/><rect x="0" y="14" width="17" height="1" fill="#9aa8b2"/></svg>
<svg style="left:568px;top:461px;" width="7" height="4" viewBox="0 0 7 4"><path d="M0 0h7L3.5 4z" fill="#1a1a1a"/></svg>
<svg style="left:585.5px;top:457.3px;" width="16" height="13" viewBox="0 0 16 13"><rect x="0" y="0" width="2.700" height="2.700" fill="#1b9fd8"/><rect x="3.300" y="0" width="2.700" height="2.700" fill="#1b9fd8"/><rect x="0" y="3.300" width="2.700" height="2.700" fill="#1b9fd8"/><rect x="3.300" y="3.300" width="2.700" height="2.700" fill="#1b9fd8"/><path d="M4.500 6L13.500 6 15 8.500H2.500z" fill="#cfc8b8"/><rect x="2.500" y="8.500" width="12.500" height="3.800" fill="#34322c"/><rect x="2.500" y="8.500" width="12.500" height=".8" fill="#6a6860"/><rect x="12" y="9.900" width="2.200" height="1.200" fill="#e8e8e0"/></svg>
<svg style="left:611px;top:461px;" width="7" height="4" viewBox="0 0 7 4"><path d="M0 0h7L3.5 4z" fill="#1a1a1a"/></svg>
<svg style="left:639.5px;top:458px;" width="7" height="9" viewBox="0 0 7 9"><path d="M.7 .7L3.500 3.500 6.300 .7M.7 4.700L3.500 7.500 6.300 4.700" fill="none" stroke="#222" stroke-width="1.300"/></svg>
<svg style="left:663.5px;top:455px;" width="17" height="15" viewBox="0 0 17 15"><defs><linearGradient id="gpc5" x1="0" y1="0" x2="1" y2="1"><stop offset="0" stop-color="#4fb4ec"/><stop offset=".48" stop-color="#62c0f0"/><stop offset=".5" stop-color="#90d6f8"/><stop offset="1" stop-color="#62c0f0"/></linearGradient></defs><rect x=".5" y=".5" width="16" height="10" fill="url(#gpc5)" stroke="#3a8fc4"/><rect x="7" y="11" width="3" height="2" fill="#b4c0c8"/><rect x="4" y="12.600" width="9" height=".8" fill="#9aa6ae"/><rect x="0" y="14" width="17" height="1" fill="#9aa8b2"/></svg>
<svg style="left:684px;top:460px;" width="7" height="4" viewBox="0 0 7 4"><path d="M0 0h7L3.5 4z" fill="#1a1a1a"/></svg>
<span class="t" style="left:347.50px;top:483.34px;font-size:12px;color:#0a0a26;transform:scaleX(1.0307);">Name</span>
<div style="left:420px;top:477px;width:1px;height:24px;background:#e5e5e5;"></div>
<span class="t" style="left:427.00px;top:483.34px;font-size:12px;color:#0a0a26;transform:scaleX(0.9210);">Size</span>
<div style="left:500px;top:477px;width:1px;height:24px;background:#e5e5e5;"></div>
<span class="t" style="left:507.00px;top:483.34px;font-size:12px;color:#0a0a26;transform:scaleX(1.0231);">Item type</span>
<div style="left:583px;top:477px;width:1px;height:24px;background:#e5e5e5;"></div>
<span class="t" style="left:590.00px;top:483.34px;font-size:12px;color:#0a0a26;transform:scaleX(1.0129);">Date modified</span>
<div style="left:674px;top:477px;width:1px;height:24px;background:#e5e5e5;"></div>
<svg style="left:378px;top:477px;" width="8" height="5" viewBox="0 0 8 5"><path d="M0 4.500L3.700 .5 7.400 4.500" fill="none" stroke="#555" stroke-width="1"/></svg>
<div style="left:678px;top:477px;width:16px;height:294px;background:#f0f0f0;"></div>
<svg style="left:682px;top:484px;" width="8" height="5" viewBox="0 0 8 5"><path d="M.6 4.6L4 1.2 7.4 4.6" fill="none" stroke="#505050" stroke-width="1.5"/></svg>
<svg style="left:682px;top:761px;" width="8" height="5" viewBox="0 0 8 5"><path d="M.6 .6L4 4 7.4 .6" fill="none" stroke="#505050" stroke-width="1.5"/></svg>
<div style="left:678px;top:494px;width:15.5px;height:173px;background:#cdcdcd;"></div>
<div style="left:459px;top:654px;width:114px;height:117px;background:#d9d9d9;"></div>
<svg style="left:356px;top:544px;box-shadow:1px 1px 3px rgba(0,0,0,.45);" width="90" height="56" viewBox="0 0 90 56"><defs><filter id="bc4" x="-20%" y="-20%" width="140%" height="140%"><feGaussianBlur stdDeviation="1.2"/></filter><filter id="bc4s"><feGaussianBlur stdDeviation=".45"/></filter></defs>
<rect width="90" height="56" fill="#2f82c8"/>
<g filter="url(#bc4)">
<path d="M-5 -5H34L20 4 4 8-5 10z" fill="#1266c0"/>
<path d="M74 -5H95V16L84 10z" fill="#0c4ea6"/>
<path d="M30 -3L50 -5 76 -3 84 8 92 14 95 22 80 24 66 18 50 14 38 8z" fill="#c8d4dc"/>
<path d="M36 0L60 -2 72 4 64 10 46 8z" fill="#e8ecee"/>
<path d="M66 14L84 12 95 18V30L76 28z" fill="#b4c4d0"/>
<path d="M2 12L16 9 30 14 44 22 30 22 12 18z" fill="#dfe8ee"/>
<path d="M-5 16L20 20 44 24 60 26 60 33-5 33z" fill="#86ccd2"/>
<path d="M-5 22L30 24 44 28-5 30z" fill="#a8dcd8"/>
<path d="M60 24L95 26V34H60z" fill="#9ab8c4"/>
<rect x="-5" y="32.500" width="100" height="3" fill="#7a9aa4"/>
<rect x="-5" y="35" width="100" height="26" fill="#86ccd0"/>
<path d="M-5 38L40 36 95 40V46L50 42-5 46z" fill="#b4dcdc"/>
<path d="M20 46L60 44 95 48V58H30z" fill="#a4c8d0"/>
<path d="M-5 48L14 46 30 52 24 60-5 60z" fill="#1664bc"/>
<path d="M80 52L95 48V60H76z" fill="#1a5cac"/>
</g>
<g filter="url(#bc4s)">
<path d="M41.500 33L43 25 45 24 47.500 28 51 28.500 53.500 31 54 33z" fill="#9a6418"/>
<path d="M57 33L59.500 25 64 19 67 21 70 27 73.500 31 74.500 33z" fill="#c4841e"/>
<path d="M59 33L61 27 64 24 65 33z" fill="#7a4a14"/>
<path d="M68 33L69 27 73 31 74 33z" fill="#8a5a1a"/>
<path d="M42 35.500L54 35.500 51 40 45 41.500z" fill="#5a4a20"/>
<path d="M57.500 35.500L74 35.500 70 44 64 48 60 43z" fill="#a06a1c"/>
<path d="M60 36L66 36 64 43z" fill="#6a4418"/>
<rect x="25" y="32" width="1.800" height="4.500" fill="#1a2a3a"/><path d="M24 38l2 1 2-1-1.500 5z" fill="#4a6a7a"/>
</g></svg>
<svg style="left:470px;top:544px;box-shadow:1px 1px 3px rgba(0,0,0,.45);" width="90" height="56" viewBox="0 0 90 56"><defs><filter id="uw5" x="-20%" y="-20%" width="140%" height="140%"><feGaussianBlur stdDeviation="1"/></filter></defs>
<rect width="90" height="56" fill="#0d6c9e"/>
<g filter="url(#uw5)">
<path d="M40 -4H95V34L80 36 60 30 46 28 42 20 48 12z" fill="#12a0c2"/>
<path d="M36 2L46 -2 54 6 50 14 44 20 46 28 38 24 40 14z" fill="#179a82"/>
<path d="M24 28L42 22 48 30 70 33 82 38 95 34V40L80 40 60 36 40 34 24 32z" fill="#1a9080"/>
<path d="M44 -4H72L64 3 50 4z" fill="#5cc0b0"/>
<path d="M70 -4H95V4L80 6z" fill="#1a8ad0"/>
<path d="M50 22L62 15 78 8 95 3V14L80 18 66 22 56 25z" fill="#7cc8e4"/>
<path d="M64 16L80 9 93 5V10L78 15 68 19z" fill="#d8eef8"/>
<ellipse cx="52" cy="21" rx="4.500" ry="2.500" fill="#6a7a80"/>
<path d="M-4 39L4 42 9 47 14 50 20 47 27 43 31 46 36 44 41 47 46 44 52 46 58 50 66 54 80 55 95 53V60H-4z" fill="#0d3c80"/>
</g></svg>
<svg style="left:356px;top:692px;box-shadow:1px 1px 3px rgba(0,0,0,.45);" width="90" height="56" viewBox="0 0 90 56"><defs><filter id="rk6" x="-20%" y="-20%" width="140%" height="140%"><feGaussianBlur stdDeviation="1"/></filter></defs>
<rect width="90" height="56" fill="#4c4c32"/>
<g filter="url(#rk6)">
<path d="M-4 -4H4L2 30 -4 40z" fill="#3a3c24"/>
<path d="M4 -4H11L9 20 6 36 2 34z" fill="#8e8e7e"/>
<path d="M2 30L10 24 16 40 14 60H-4V40z" fill="#5e5e40"/>
<path d="M13 -4H30L24 30 20 60H14L16 36z" fill="#383a20"/>
<path d="M32 -4H36L28 36 24 60H21L26 30z" fill="#9c9c8e"/>
<path d="M44 -4H55L50 20 46 34 42 38 38 60H28L34 30 40 10z" fill="#b2b2aa"/>
<path d="M47 -4H52L46 24 40 40 42 20z" fill="#d0d0ca"/>
<path d="M41 36L47 33 49 40 47 60H38z" fill="#2a2c20"/>
<path d="M54 -4H95V14L70 16 56 18z" fill="#3e4028"/>
<path d="M52 20L70 16 84 18 90 40 95 60H48z" fill="#6c6c52"/>
<path d="M60 22L68 20 70 30 64 32z" fill="#86866e"/>
<path d="M68 36L78 32 80 46 72 50z" fill="#585a3e"/>
<path d="M82 10L95 8V42L86 40z" fill="#1c2c4a"/>
<path d="M24 20L28 18 26 36 22 40z" fill="#1e2c46"/>
</g></svg>
<svg style="left:470px;top:692px;box-shadow:1px 1px 3px rgba(0,0,0,.45);" width="90" height="56" viewBox="0 0 90 56"><defs><filter id="nt7" x="-20%" y="-20%" width="140%" height="140%"><feGaussianBlur stdDeviation=".9"/></filter></defs>
<rect width="90" height="56" fill="#100e06"/>
<g filter="url(#nt7)">
<path d="M34 -3H58L70 10 80 20 92 34V41H14L22 26 28 12z" fill="#12305a"/>
<path d="M37 -3H54L57 14 58 28 56 41H42L41 26 39 12z" fill="#5c5e48"/>
<path d="M42 -3H50L53 16 52 34 48 40 45 30 43 14z" fill="#86846a"/>
<path d="M14 40H92V43H14z" fill="#4a2610"/>
<ellipse cx="47" cy="40.500" rx="8" ry="1.900" fill="#e4621a"/>
<path d="M52 50L58 44 66 50z" fill="#48a868"/>
<path d="M55 49L58 45.500 61 49z" fill="#58d070"/>
</g></svg>
<span class="t b" style="left:388.00px;top:608.84px;font-size:12px;color:#b500b5;transform:scaleX(0.9637);">img1</span>
<span class="t b" style="left:502.00px;top:608.84px;font-size:12px;color:#b500b5;transform:scaleX(0.9637);">img2</span>
<span class="t b" style="left:388.00px;top:756.84px;font-size:12px;color:#b500b5;transform:scaleX(0.9637);">img3</span>
<span class="t b" style="left:502.00px;top:756.84px;font-size:12px;color:#b500b5;transform:scaleX(0.9637);">img4</span>
<div style="left:340px;top:771px;width:355px;height:14px;background:#fff;"></div>
<svg style="left:343px;top:776px;" width="13" height="14" viewBox="0 0 13 14"><rect x=".5" y=".5" width="12" height="13" fill="none" stroke="#8a8a8a" stroke-dasharray="1 1"/><path d="M6.5 4v6" stroke="#7a8aa0" stroke-width="1.2"/></svg>
<span class="t" style="left:363.50px;top:777.84px;font-size:12px;color:#0a0a26;transform:scaleX(0.9306);">Item type: JPEG image D</span>
<svg style="left:500px;top:776px;" width="12" height="16" viewBox="0 0 12 16"><path d="M3 .6H12L7.300 5.300H10.700L3.700 15.300 5.300 10H2.300L4.300 6.300H.4z" fill="none" stroke="#0a0a0a" stroke-width="1.100" stroke-linejoin="miter"/><path d="M12 .6L7.300 5.300M10.700 5.300L3.700 15.300" stroke="#0a0a0a" stroke-width="1.700"/></svg>
<svg style="left:521px;top:779px;" width="16" height="10" viewBox="0 0 16 10"><rect x=".5" y=".5" width="15" height="9" fill="#f1f3f6" stroke="#7e8a96"/><path d="M5 5.500h7.500M5 7.500h7.500" stroke="#b8bcc2" stroke-width="1"/><rect x="12" y="2" width="2" height="2" fill="#7a8298"/><path d="M2 2.500h2.500" stroke="#d8c4b0" stroke-width="1"/></svg>
<svg style="left:546px;top:777px;" width="13" height="12" viewBox="0 0 13 12"><path d="M1 1.5L3 0l3 3.5L9.5 0 12 1.8 8 6l4 4.2L9.6 12 6 8.4 2.6 12 0 10l3.8-4z" fill="#d01818"/></svg>
<div style="left:565px;top:775px;width:1px;height:12px;background:#8a8a8a;"></div>
<svg style="left:577px;top:777px;" width="10" height="14" viewBox="0 0 10 14"><path d="M2 0l3.5 9M9 0L5.5 9" stroke="#b0b0b0" stroke-width="1.2" fill="none"/><circle cx="3.5" cy="11" r="1.8" fill="none" stroke="#b0b0b0"/><circle cx="7.5" cy="11" r="1.8" fill="none" stroke="#b0b0b0"/></svg>
<svg style="left:598.5px;top:777px;" width="13" height="15" viewBox="0 0 13 15"><path d="M.5 .5h6l2 2V10H.5z" fill="#fff" stroke="#9a9a9a"/><path d="M4.5 4.5h6l2 2V14H4.5z" fill="#fff" stroke="#8a8a8a"/><path d="M6 8h5M6 10h5M6 12h5" stroke="#c0c0c0"/></svg>
<svg style="left:621.5px;top:776px;" width="13" height="15" viewBox="0 0 13 15"><rect x=".5" y="1.5" width="11" height="12" fill="#8a7a4a" stroke="#333"/><rect x="3" y="0" width="6" height="3" fill="#d8d8d8" stroke="#333" stroke-width=".7"/><rect x="3.5" y="5.5" width="9" height="9" fill="#fff" stroke="#555"/><path d="M5 8h6M5 10h6M5 12h6" stroke="#999"/></svg>
<div style="left:642px;top:775px;width:1px;height:12px;background:#8a8a8a;"></div>
<svg style="left:653px;top:776px;" width="14" height="15" viewBox="0 0 14 15"><path d="M0 14l1.5-4.5L10.5 .5l3 3L4.5 12.5z" fill="#fff" stroke="#111" stroke-width="1.1"/><path d="M0 14l1.5-4.5 3 3z" fill="#111"/></svg>
<svg style="left:675px;top:777px;" width="16" height="14" viewBox="0 0 16 14"><rect x=".5" y=".5" width="14" height="13" fill="#e8e8e8" stroke="#333"/><rect x="2" y="3.0" width="2" height="2" fill="#444"/><rect x="5" y="3.0" width="2" height="2" fill="#444"/><rect x="8" y="3.0" width="2" height="2" fill="#444"/><rect x="11" y="3.0" width="2" height="2" fill="#444"/><rect x="2" y="6.4" width="2" height="2" fill="#444"/><rect x="5" y="6.4" width="2" height="2" fill="#444"/><rect x="8" y="6.4" width="2" height="2" fill="#444"/><rect x="11" y="6.4" width="2" height="2" fill="#444"/><rect x="2" y="9.8" width="2" height="2" fill="#444"/><rect x="5" y="9.8" width="2" height="2" fill="#444"/><rect x="8" y="9.8" width="2" height="2" fill="#444"/><rect x="11" y="9.8" width="2" height="2" fill="#444"/></svg>
<div style="left:701px;top:450px;width:199px;height:335px;background:#fff;box-sizing:border-box;border:1px solid #a0a0a0;border-right:none;border-bottom:none;border-left:2px solid #a0a0a0;"></div>
<div style="left:703px;top:476px;width:197px;height:1px;background:#a8a8a8;"></div>
<svg style="left:705.1px;top:454.3px;" width="16" height="16" viewBox="0 0 16 16"><defs><linearGradient id="gb5" x1="0" y1="0" x2="0" y2="1"><stop offset="0" stop-color="#8fb0d2"/><stop offset=".42" stop-color="#4a7fb8"/><stop offset=".5" stop-color="#0d4a92"/><stop offset=".62" stop-color="#0b5aa6"/><stop offset="1" stop-color="#25b4ec"/></linearGradient></defs><circle cx="8" cy="8" r="7.500" fill="#5f87ad"/><circle cx="8" cy="8" r="6.700" fill="url(#gb5)"/><path d="M3.700 8.500L7.200 5.300v2h4.600v2.400H7.200v2z" fill="#fff"/></svg>
<svg style="left:728px;top:454.3px;" width="16" height="16" viewBox="0 0 16 16"><defs><linearGradient id="gb6" x1="0" y1="0" x2="0" y2="1"><stop offset="0" stop-color="#9aa096"/><stop offset=".42" stop-color="#6a7064"/><stop offset=".5" stop-color="#34382c"/><stop offset=".62" stop-color="#3c4034"/><stop offset="1" stop-color="#6e7466"/></linearGradient></defs><circle cx="8" cy="8" r="7.500" fill="#7e8478"/><circle cx="8" cy="8" r="6.700" fill="url(#gb6)"/><path d="M12.300 8.500L8.800 5.300v2H4.200v2.400h4.600v2z" fill="#fff"/></svg>
<svg style="left:752px;top:454px;" width="14" height="16" viewBox="0 0 14 16"><path d="M.5 6.200l3.500-.8 1 1.200 3-.5V15l-7.500 .6z" fill="#f3d25c" stroke="#c9a227" stroke-width=".6"/><path d="M1.500 15.500L3.500 9.300l8.700-1.500-2.200 7z" fill="#fdf0a4" stroke="#cdaa30" stroke-width=".6"/><path d="M7.600 .3L12.600 5l-2 .2c.3 2.800-.8 5.400-3.600 7.400 1-2.500 1.300-4.500 1-6.900L5.200 6z" fill="#35b335" stroke="#0d6a10" stroke-width=".7"/></svg>
<svg style="left:775px;top:456.5px;" width="16" height="13" viewBox="0 0 16 13"><path d="M.5 3.300l3.600-.7 1 1.100 5-.5v8.600L.5 12.400z" fill="#e2e2e2" stroke="#a8a8a8" stroke-width=".7"/><path d="M.8 12.500L3.200 6.400l9.400-1.200-2.600 6.600z" fill="#f4f4f4" stroke="#a8a8a8" stroke-width=".7"/><path d="M12.800 .2l.6 1.500 1.500-.6-.7 1.500 1.400 .8-1.600 .4 .2 1.600-1.400-1-1.300 1 .2-1.600-1.600-.4 1.400-.8-.7-1.500 1.500 .6z" fill="#cfcfcf" stroke="#9a9a9a" stroke-width=".5"/><circle cx="12.800" cy="3.300" r="1" fill="#f4f4f4"/></svg>
<svg style="left:799px;top:455px;" width="15" height="14" viewBox="0 0 15 14"><rect x=".5" y=".5" width="14" height="13" rx="1" fill="#fff" stroke="#1b6486"/><rect x=".5" y=".5" width="14" height="2.500" fill="#175a7e"/><rect x="3.0" y="5.2" width="2.2" height="2.4" fill="#8a9ab0"/><rect x="6.6" y="5.2" width="2.2" height="2.4" fill="#2a5aa8"/><rect x="10.2" y="5.2" width="2.2" height="2.4" fill="#2a9a3a"/><rect x="3.0" y="9.2" width="2.2" height="2.4" fill="#f08020"/><rect x="6.6" y="9.2" width="2.2" height="2.4" fill="#102a70"/><rect x="10.2" y="9.2" width="2.2" height="2.4" fill="#e8a030"/></svg>
<svg style="left:821px;top:460px;" width="7" height="4" viewBox="0 0 7 4"><path d="M0 0h7L3.5 4z" fill="#1a1a1a"/></svg>
<svg style="left:835.5px;top:454.3px;" width="15" height="16" viewBox="0 0 15 16"><path d="M1.2 7.2A6.3 6.3 0 0 1 11.5 3.2L13.6 1V7.2H7.4L9.6 5A3.6 3.6 0 0 0 4 7.2z" fill="#2b83e6"/><path d="M13.8 8.8A6.3 6.3 0 0 1 3.5 12.8L1.4 15V8.8H7.6L5.4 11A3.6 3.6 0 0 0 11 8.8z" fill="#2b83e6"/></svg>
<div style="left:855px;top:452px;width:50px;height:22px;background:#fff;box-sizing:border-box;border:1px solid #d4dce4;"></div>
<svg style="left:862px;top:457px;" width="16" height="12" viewBox="0 0 16 12"><defs><linearGradient id="gds6" x1="0" y1="0" x2="1" y2="1"><stop offset="0" stop-color="#1b93cf"/><stop offset=".48" stop-color="#1d9bd6"/><stop offset=".5" stop-color="#3ab2e4"/><stop offset=".75" stop-color="#2aa6dc"/><stop offset="1" stop-color="#1d9bd6"/></linearGradient></defs><rect x="0" y="0" width="16" height="12" fill="url(#gds6)"/><rect x=".4" y=".4" width="15.200" height="11.200" fill="none" stroke="#0f6ea6" stroke-width=".8"/><rect x="0" y="9.800" width="16" height="2.200" fill="#0c5588"/><rect x="1.400" y="10.500" width="1" height=".9" fill="#fff"/><rect x="12.600" y="10.500" width="1" height=".9" fill="#fff"/><rect x="14.200" y="10.500" width=".9" height=".9" fill="#fff"/></svg>
<svg style="left:887px;top:461px;" width="7" height="4" viewBox="0 0 7 4"><path d="M0 0h7L3.5 4z" fill="#1a1a1a"/></svg>
<span class="t" style="left:710.00px;top:483.34px;font-size:12px;color:#0a0a26;transform:scaleX(1.0307);">Name</span>
<svg style="left:739.5px;top:477px;" width="8" height="5" viewBox="0 0 8 5"><path d="M0 4.500L3.700 .5 7.400 4.500" fill="none" stroke="#555" stroke-width="1"/></svg>
<div style="left:782px;top:477px;width:1px;height:24px;background:#e5e5e5;"></div>
<span class="t" style="left:790.00px;top:483.34px;font-size:12px;color:#0a0a26;transform:scaleX(0.9802);">Type</span>
<div style="left:862px;top:477px;width:1px;height:24px;background:#e5e5e5;"></div>
<span class="t" style="left:869.50px;top:483.34px;font-size:12px;color:#0a0a26;transform:scaleX(0.9802);">Total Size</span>
<svg style="left:748px;top:506px;" width="44" height="42" viewBox="0 0 44 42"><defs><linearGradient id="gbf" x1="0" y1="0" x2="1" y2="0"><stop offset="0" stop-color="#f3cc5e"/><stop offset=".75" stop-color="#f7d97f"/><stop offset=".9" stop-color="#fbe6a4"/><stop offset="1" stop-color="#fdeebc"/></linearGradient></defs><path d="M0 0H24.7V34.500H9z" fill="url(#gbf)"/><path d="M0 0L9 5.500V40.500L0 34z" fill="#fbe3a0"/><path d="M9 5.500V40.500" stroke="#f8da88" stroke-width=".8"/><path d="M23 18L35 24 23 29.500 11 24z" fill="#7ccff0"/><path d="M23 18L35 24 23 29.500z" fill="#58bfe8"/><path d="M11 24L23 29.500V41.500L11 35.500z" fill="#d3eefb"/><path d="M35 24L23 29.500V41.500L35 35.500z" fill="#1f9dcd"/><path d="M11 35.500L23 32 35 35.500 23 41.500z" fill="#1a86b8" opacity=".75"/><path d="M11 24L23 29.500V34L11 35.500z" fill="#e6f6fd" opacity=".8"/><path d="M9 34.500l3 .5v2.500l-3 1.500z" fill="#fff"/></svg>
<span class="t b" style="left:733.75px;top:555.84px;font-size:12px;color:#0f8a24;transform:scaleX(0.9649);">3D Objects</span>
<svg style="left:862px;top:508px;" width="44" height="42" viewBox="0 0 44 42"><defs><linearGradient id="gbf" x1="0" y1="0" x2="1" y2="0"><stop offset="0" stop-color="#f3cc5e"/><stop offset=".75" stop-color="#f7d97f"/><stop offset=".9" stop-color="#fbe6a4"/><stop offset="1" stop-color="#fdeebc"/></linearGradient></defs><path d="M0 0H24.7V34.500H9z" fill="url(#gbf)"/><path d="M0 0L9 5.500V40.500L0 34z" fill="#fbe3a0"/><path d="M9 5.500V40.500" stroke="#f8da88" stroke-width=".8"/><rect x="12" y="19" width="30" height="20" fill="#1e9ee6"/><path d="M12 39L32 19h10v6L28 39z" fill="#3cb6f0"/><rect x="12" y="19" width="30" height="20" fill="none" stroke="#155fa0" stroke-width="1"/><rect x="12" y="36.5" width="30" height="2.5" fill="#0e4a86"/><rect x="14" y="37.3" width="1.2" height="1" fill="#fff"/><rect x="36" y="37.3" width="1.2" height="1" fill="#fff"/><rect x="38" y="37.3" width="1.2" height="1" fill="#fff"/></svg>
<span class="t b" style="left:854.50px;top:555.84px;font-size:12px;color:#0f8a24;transform:scaleX(0.9927);">Desktop</span>
<svg style="left:748px;top:606px;" width="44" height="42" viewBox="0 0 44 42"><defs><linearGradient id="gbf" x1="0" y1="0" x2="1" y2="0"><stop offset="0" stop-color="#f3cc5e"/><stop offset=".75" stop-color="#f7d97f"/><stop offset=".9" stop-color="#fbe6a4"/><stop offset="1" stop-color="#fdeebc"/></linearGradient></defs><path d="M0 0H24.7V34.500H9z" fill="url(#gbf)"/><path d="M0 0L9 5.500V40.500L0 34z" fill="#fbe3a0"/><path d="M9 5.500V40.500" stroke="#f8da88" stroke-width=".8"/><path d="M13.5 9.5h14l5.5 5.5v21.5H13.5z" fill="#fff" stroke="#9aa4ae" stroke-width="1"/><path d="M27.5 9.5v5.5H33" fill="#e8eef4" stroke="#9aa4ae" stroke-width="1"/><path d="M16 19l2.5-7 2.5 7M17 17h3" fill="none" stroke="#1e6fc8" stroke-width="1.4"/><path d="M22.5 14h4M22.5 17.5h8M16 21.5h14.5" stroke="#2a86d8" stroke-width="1.3"/><path d="M16 25h7M16 28h7M16 31h7" stroke="#b0b8c0" stroke-width="1.2"/><rect x="24.5" y="24" width="6.5" height="8" fill="#3a7a9a"/><path d="M24.5 29l3-2 3.5 3v2h-6.5z" fill="#2a4a3a"/></svg>
<span class="t b" style="left:733.25px;top:653.84px;font-size:12px;color:#0f8a24;transform:scaleX(0.9565);">Documents</span>
<svg style="left:862px;top:606px;" width="44" height="42" viewBox="0 0 44 42"><defs><linearGradient id="gbf" x1="0" y1="0" x2="1" y2="0"><stop offset="0" stop-color="#f3cc5e"/><stop offset=".75" stop-color="#f7d97f"/><stop offset=".9" stop-color="#fbe6a4"/><stop offset="1" stop-color="#fdeebc"/></linearGradient></defs><path d="M0 0H24.7V34.500H9z" fill="url(#gbf)"/><path d="M0 0L9 5.500V40.500L0 34z" fill="#fbe3a0"/><path d="M9 5.500V40.500" stroke="#f8da88" stroke-width=".8"/><path d="M21 13h11v12h7L26.5 38 14 25h7z" fill="#2e8be6"/></svg>
<span class="t b" style="left:847.00px;top:653.84px;font-size:12px;color:#0f8a24;transform:scaleX(0.9685);">Downloads</span>
<svg style="left:748px;top:704px;" width="44" height="42" viewBox="0 0 44 42"><defs><linearGradient id="gbf" x1="0" y1="0" x2="1" y2="0"><stop offset="0" stop-color="#f3cc5e"/><stop offset=".75" stop-color="#f7d97f"/><stop offset=".9" stop-color="#fbe6a4"/><stop offset="1" stop-color="#fdeebc"/></linearGradient></defs><path d="M0 0H24.7V34.500H9z" fill="url(#gbf)"/><path d="M0 0L9 5.500V40.500L0 34z" fill="#fbe3a0"/><path d="M9 5.500V40.500" stroke="#f8da88" stroke-width=".8"/><ellipse cx="20" cy="33" rx="6.5" ry="5" fill="#169fc8"/><path d="M24 33.5V5.5c2 3 4 5 7 7.5 4 3.5 4 8 .5 13 1.5-5 0-8-4.5-10v17.5z" fill="#169fc8"/></svg>
<span class="t b" style="left:748.50px;top:751.84px;font-size:12px;color:#0f8a24;transform:scaleX(0.9113);">Music</span>
<svg style="left:862px;top:704px;" width="44" height="42" viewBox="0 0 44 42"><defs><linearGradient id="gbf" x1="0" y1="0" x2="1" y2="0"><stop offset="0" stop-color="#f3cc5e"/><stop offset=".75" stop-color="#f7d97f"/><stop offset=".9" stop-color="#fbe6a4"/><stop offset="1" stop-color="#fdeebc"/></linearGradient></defs><path d="M0 0H24.7V34.500H9z" fill="url(#gbf)"/><path d="M0 0L9 5.500V40.500L0 34z" fill="#fbe3a0"/><path d="M9 5.500V40.500" stroke="#f8da88" stroke-width=".8"/><rect x="11.500" y="17.5" width="28" height="19" fill="#fff" stroke="#a8b0b8"/><rect x="13" y="19" width="25" height="16" fill="#9cc4d4"/><path d="M13 29l6-4 6 3 13-2v9H13z" fill="#3a6a6a"/><path d="M13 31l25-1v5H13z" fill="#6a9aa0"/></svg>
<span class="t b" style="left:855.00px;top:751.84px;font-size:12px;color:#0f8a24;transform:scaleX(0.9713);">Pictures</span>
<div style="left:703px;top:770px;width:197px;height:15px;background:#fff;"></div>
<span class="t" style="left:707.50px;top:777.99px;font-size:13px;color:#777;transform:scaleX(1.1806);">Σ</span>
<span class="t" style="left:724.50px;top:777.84px;font-size:12px;color:#0a0a26;transform:scaleX(0.9664);">9 Objects</span>
<svg style="left:780.5px;top:782px;" width="7" height="4" viewBox="0 0 7 4"><path d="M0 0h7L3.5 4z" fill="#1a1a1a"/></svg>
<svg style="left:862.5px;top:776.5px;" width="12" height="16" viewBox="0 0 12 16"><path d="M3 .6H12L7.300 5.300H10.700L3.700 15.300 5.300 10H2.300L4.300 6.300H.4z" fill="none" stroke="#0a0a0a" stroke-width="1.100" stroke-linejoin="miter"/><path d="M12 .6L7.300 5.300M10.700 5.300L3.700 15.300" stroke="#0a0a0a" stroke-width="1.700"/></svg>
<svg style="left:883px;top:779px;" width="16" height="10" viewBox="0 0 16 10"><rect x=".5" y=".5" width="15" height="9" fill="#f1f3f6" stroke="#7e8a96"/><path d="M5 5.500h7.500M5 7.500h7.500" stroke="#b8bcc2" stroke-width="1"/><rect x="12" y="2" width="2" height="2" fill="#7a8298"/><path d="M2 2.500h2.500" stroke="#d8c4b0" stroke-width="1"/></svg>
<div style="left:12px;top:13px;width:2px;height:57px;background:#e4edf6;"></div>
<div style="left:12px;top:70px;width:2px;height:715px;background:#8db0d6;"></div>
</div></body></html>
